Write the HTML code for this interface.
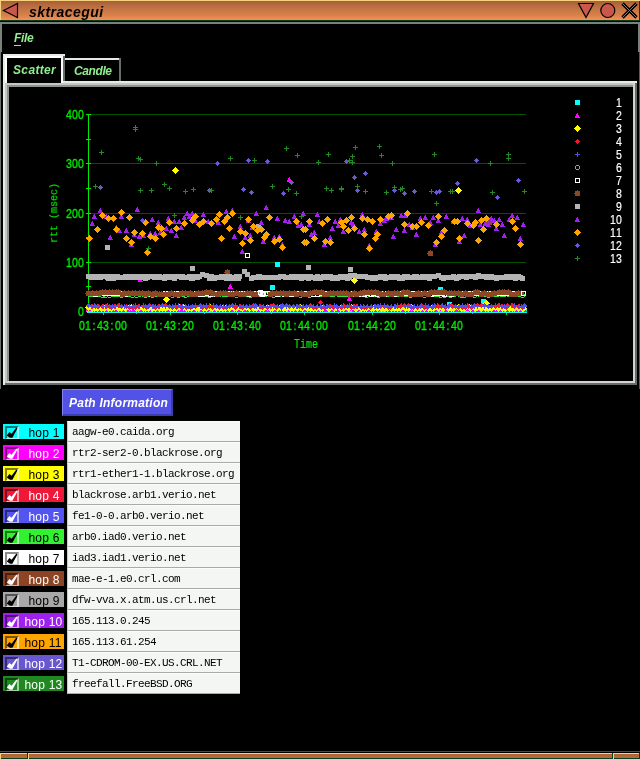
<!DOCTYPE html>
<html><head><meta charset="utf-8"><title>sktracegui</title>
<style>
html,body{margin:0;padding:0;background:#000;}
body{width:640px;height:759px;position:relative;overflow:hidden;font-family:"Liberation Sans",sans-serif;}
.a{position:absolute;}
.mono{font-family:"Liberation Mono",monospace;}
.dg6{font-family:"Liberation Sans",sans-serif;font-size:10.5px !important;transform:scale(1,1.18) !important;}
.dg6 i{display:inline-block;width:6px;text-align:center;font-style:normal;}
.tl{will-change:transform;font-size:10px;line-height:14px;height:14px;white-space:nowrap;transform:scale(1,1.12);transform-origin:50% 50%;-webkit-text-stroke:0.3px;}
.mono.tl{-webkit-text-stroke:0.15px;}
#title{left:0;top:0;width:640px;height:21px;background:linear-gradient(#a45e36 0px,#a65f37 1px,#b66a3e 5px,#c67747 10px,#d97f49 15px,#ea8953 18px,#f48f5c 20px);}
.hi{background:#f6d27e;}
.dg{background:#06401c;}
.hl{will-change:transform;font-style:italic;font-weight:bold;color:#90ee90;font-size:12px;letter-spacing:-0.3px;white-space:nowrap;}
.hop{overflow:hidden;will-change:transform;left:3px;width:61px;height:15px;font-size:12px;line-height:15px;white-space:nowrap;}
.hop span{position:absolute;top:2px;letter-spacing:0.2px;}
.cb{position:absolute;left:2px;top:2px;width:10px;height:10px;border-style:solid;border-width:2px 2px 1px 2px;}
.ent{will-change:transform;left:67px;width:173px;height:21px;background:#f4f6f4;box-sizing:border-box;border-bottom:1px solid #a8aca8;border-left:1px solid #c8ccc8;border-top:1px solid #fafcfa;font-family:"Liberation Mono",monospace;font-size:11px;letter-spacing:-0.6px;line-height:20px;color:#000;padding-left:4px;white-space:nowrap;}
</style></head>
<body>
<div class="a" id="title"></div>
<div class="a hi" style="left:0;top:0;width:640px;height:1px"></div>
<div class="a hi" style="left:0;top:0;width:1px;height:20px"></div>
<div class="a dg" style="left:0;top:20px;width:640px;height:1px"></div>
<div class="a dg" style="left:639px;top:1px;width:1px;height:20px"></div>
<svg class="a" style="left:0;top:0" width="640" height="21" viewBox="0 0 640 21">
<polygon points="3.5,10.5 17.5,3.5 17.5,17.5" fill="#c9574c" stroke="#000" stroke-width="1.2"/>
<polygon points="578.5,3.5 593.5,3.5 586,17.5" fill="#c9574c" stroke="#000" stroke-width="1.2"/>
<circle cx="607.8" cy="10.5" r="7" fill="#c9574c" stroke="#000" stroke-width="1.2"/>
<path d="M622.5,3.5 L636.5,17.5 M636.5,3.5 L622.5,17.5" stroke="#000" stroke-width="3.2" fill="none"/>
<path d="M622.5,3.5 L636.5,17.5 M636.5,3.5 L622.5,17.5" stroke="#d05a54" stroke-width="1" fill="none"/>
</svg>
<div class="a" style="left:29px;top:4px;font-size:14px;line-height:17px;font-weight:bold;font-style:italic;color:#000;white-space:nowrap;letter-spacing:0.45px;will-change:transform" id="ttl">sktracegui</div>
<div class="a" style="left:0;top:22px;width:640px;height:2px;background:#7a807c"></div>
<div class="a" style="left:0;top:22px;width:2px;height:30px;background:#7a807c"></div>
<div class="a" style="left:0;top:52px;width:1px;height:337px;background:#6a706c"></div>
<div class="a" style="left:638px;top:22px;width:2px;height:30px;background:#7a807c"></div>
<div class="a" style="left:639px;top:52px;width:1px;height:337px;background:#565c58"></div>
<div class="a hl" style="left:14px;top:31px;line-height:14px" id="file">File</div>
<div class="a" style="left:14px;top:45px;width:7px;height:1px;background:#90ee90"></div>
<div class="a" style="left:3px;top:81px;width:634px;height:304px;background:#e6eae6"></div>
<div class="a" style="left:5px;top:83px;width:632px;height:302px;background:#c4c8c4"></div>
<div class="a" style="left:7px;top:85px;width:630px;height:300px;background:#8e928e"></div>
<div class="a" style="left:5px;top:383px;width:632px;height:2px;background:#666c68"></div>
<div class="a" style="left:635px;top:83px;width:2px;height:302px;background:#666c68"></div>
<div class="a" style="left:7px;top:381px;width:628px;height:2px;background:#d2d6d2"></div>
<div class="a" style="left:633px;top:83px;width:2px;height:300px;background:#d2d6d2"></div>
<div class="a" style="left:9px;top:87px;width:624px;height:294px;background:#000"></div>
<div class="a" style="left:3px;top:54px;width:62px;height:29px;background:#e6eae6"></div>
<div class="a" style="left:5px;top:56px;width:58px;height:27px;background:#fff"></div>
<div class="a" style="left:63px;top:56px;width:2px;height:25px;background:#666c68"></div>
<div class="a" style="left:7px;top:58px;width:54px;height:25px;background:#000"></div>
<div class="a hl" style="left:13px;top:63px;line-height:14px;letter-spacing:0.35px" id="sc">Scatter</div>
<div class="a" style="left:65px;top:58px;width:56px;height:23px;background:#e6eae6"></div>
<div class="a" style="left:119px;top:58px;width:2px;height:23px;background:#666c68"></div>
<div class="a" style="left:65px;top:60px;width:54px;height:21px;background:#000"></div>
<div class="a hl" style="left:74px;top:64px;line-height:14px;letter-spacing:-0.4px" id="ca">Candle</div>
<svg class="a" style="left:0;top:0" width="640" height="400" viewBox="0 0 640 400" shape-rendering="crispEdges">
<rect x="91" y="262" width="435" height="1" fill="#005400"/>
<rect x="91" y="213" width="435" height="1" fill="#005400"/>
<rect x="91" y="163" width="435" height="1" fill="#005400"/>
<rect x="91" y="114" width="435" height="1" fill="#005400"/>
<rect x="88" y="114" width="1" height="199" fill="#00ec00"/>
<rect x="86" y="311" width="5" height="1" fill="#00ec00"/>
<rect x="86" y="262" width="5" height="1" fill="#00ec00"/>
<rect x="86" y="213" width="5" height="1" fill="#00ec00"/>
<rect x="86" y="163" width="5" height="1" fill="#00ec00"/>
<rect x="86" y="114" width="5" height="1" fill="#00ec00"/>
<rect x="86" y="286" width="5" height="1" fill="#00ec00"/>
<rect x="86" y="237" width="5" height="1" fill="#00ec00"/>
<rect x="86" y="188" width="5" height="1" fill="#00ec00"/>
<rect x="86" y="139" width="5" height="1" fill="#00ec00"/>
<rect x="103" y="313" width="1" height="2" fill="#00ec00"/>
<rect x="136" y="313" width="1" height="1" fill="#00ec00"/>
<rect x="170" y="313" width="1" height="2" fill="#00ec00"/>
<rect x="204" y="313" width="1" height="1" fill="#00ec00"/>
<rect x="237" y="313" width="1" height="2" fill="#00ec00"/>
<rect x="271" y="313" width="1" height="1" fill="#00ec00"/>
<rect x="304" y="313" width="1" height="2" fill="#00ec00"/>
<rect x="338" y="313" width="1" height="1" fill="#00ec00"/>
<rect x="372" y="313" width="1" height="2" fill="#00ec00"/>
<rect x="405" y="313" width="1" height="1" fill="#00ec00"/>
<rect x="439" y="313" width="1" height="2" fill="#00ec00"/>
<rect x="472" y="313" width="1" height="1" fill="#00ec00"/>
<rect x="506" y="313" width="1" height="2" fill="#00ec00"/>
<g><rect x="87" y="308" width="5" height="5" fill="#00ffff"/><rect x="90" y="308" width="5" height="5" fill="#00ffff"/><rect x="94" y="308" width="5" height="5" fill="#00ffff"/><rect x="97" y="308" width="5" height="5" fill="#00ffff"/><rect x="100" y="308" width="5" height="5" fill="#00ffff"/><rect x="103" y="308" width="5" height="5" fill="#00ffff"/><rect x="106" y="308" width="5" height="5" fill="#00ffff"/><rect x="110" y="308" width="5" height="5" fill="#00ffff"/><rect x="114" y="308" width="5" height="5" fill="#00ffff"/><rect x="117" y="308" width="5" height="5" fill="#00ffff"/><rect x="120" y="308" width="5" height="5" fill="#00ffff"/><rect x="123" y="308" width="5" height="5" fill="#00ffff"/><rect x="127" y="308" width="5" height="5" fill="#00ffff"/><rect x="131" y="308" width="5" height="5" fill="#00ffff"/><rect x="134" y="308" width="5" height="5" fill="#00ffff"/><rect x="137" y="308" width="5" height="5" fill="#00ffff"/><rect x="141" y="308" width="5" height="5" fill="#00ffff"/><rect x="144" y="308" width="5" height="5" fill="#00ffff"/><rect x="147" y="308" width="5" height="5" fill="#00ffff"/><rect x="151" y="308" width="5" height="5" fill="#00ffff"/><rect x="153" y="308" width="5" height="5" fill="#00ffff"/><rect x="157" y="308" width="5" height="5" fill="#00ffff"/><rect x="161" y="308" width="5" height="5" fill="#00ffff"/><rect x="163" y="308" width="5" height="5" fill="#00ffff"/><rect x="167" y="308" width="5" height="5" fill="#00ffff"/><rect x="170" y="308" width="5" height="5" fill="#00ffff"/><rect x="173" y="308" width="5" height="5" fill="#00ffff"/><rect x="177" y="308" width="5" height="5" fill="#00ffff"/><rect x="181" y="308" width="5" height="5" fill="#00ffff"/><rect x="184" y="308" width="5" height="5" fill="#00ffff"/><rect x="187" y="308" width="5" height="5" fill="#00ffff"/><rect x="191" y="308" width="5" height="5" fill="#00ffff"/><rect x="194" y="308" width="5" height="5" fill="#00ffff"/><rect x="198" y="308" width="5" height="5" fill="#00ffff"/><rect x="201" y="308" width="5" height="5" fill="#00ffff"/><rect x="204" y="308" width="5" height="5" fill="#00ffff"/><rect x="208" y="308" width="5" height="5" fill="#00ffff"/><rect x="211" y="308" width="5" height="5" fill="#00ffff"/><rect x="215" y="308" width="5" height="5" fill="#00ffff"/><rect x="218" y="308" width="5" height="5" fill="#00ffff"/><rect x="221" y="308" width="5" height="5" fill="#00ffff"/><rect x="224" y="308" width="5" height="5" fill="#00ffff"/><rect x="228" y="308" width="5" height="5" fill="#00ffff"/><rect x="231" y="308" width="5" height="5" fill="#00ffff"/><rect x="235" y="308" width="5" height="5" fill="#00ffff"/><rect x="238" y="308" width="5" height="5" fill="#00ffff"/><rect x="242" y="308" width="5" height="5" fill="#00ffff"/><rect x="244" y="308" width="5" height="5" fill="#00ffff"/><rect x="248" y="308" width="5" height="5" fill="#00ffff"/><rect x="252" y="308" width="5" height="5" fill="#00ffff"/><rect x="254" y="308" width="5" height="5" fill="#00ffff"/><rect x="258" y="308" width="5" height="5" fill="#00ffff"/><rect x="262" y="308" width="5" height="5" fill="#00ffff"/><rect x="265" y="308" width="5" height="5" fill="#00ffff"/><rect x="269" y="308" width="5" height="5" fill="#00ffff"/><rect x="271" y="308" width="5" height="5" fill="#00ffff"/><rect x="274" y="308" width="5" height="5" fill="#00ffff"/><rect x="278" y="308" width="5" height="5" fill="#00ffff"/><rect x="282" y="308" width="5" height="5" fill="#00ffff"/><rect x="285" y="308" width="5" height="5" fill="#00ffff"/><rect x="288" y="308" width="5" height="5" fill="#00ffff"/><rect x="291" y="308" width="5" height="5" fill="#00ffff"/><rect x="295" y="308" width="5" height="5" fill="#00ffff"/><rect x="299" y="308" width="5" height="5" fill="#00ffff"/><rect x="301" y="308" width="5" height="5" fill="#00ffff"/><rect x="305" y="308" width="5" height="5" fill="#00ffff"/><rect x="308" y="308" width="5" height="5" fill="#00ffff"/><rect x="311" y="308" width="5" height="5" fill="#00ffff"/><rect x="315" y="308" width="5" height="5" fill="#00ffff"/><rect x="318" y="308" width="5" height="5" fill="#00ffff"/><rect x="322" y="308" width="5" height="5" fill="#00ffff"/><rect x="325" y="308" width="5" height="5" fill="#00ffff"/><rect x="328" y="308" width="5" height="5" fill="#00ffff"/><rect x="332" y="308" width="5" height="5" fill="#00ffff"/><rect x="335" y="308" width="5" height="5" fill="#00ffff"/><rect x="339" y="308" width="5" height="5" fill="#00ffff"/><rect x="342" y="308" width="5" height="5" fill="#00ffff"/><rect x="345" y="308" width="5" height="5" fill="#00ffff"/><rect x="348" y="308" width="5" height="5" fill="#00ffff"/><rect x="352" y="308" width="5" height="5" fill="#00ffff"/><rect x="356" y="308" width="5" height="5" fill="#00ffff"/><rect x="359" y="308" width="5" height="5" fill="#00ffff"/><rect x="362" y="308" width="5" height="5" fill="#00ffff"/><rect x="366" y="308" width="5" height="5" fill="#00ffff"/><rect x="369" y="308" width="5" height="5" fill="#00ffff"/><rect x="372" y="308" width="5" height="5" fill="#00ffff"/><rect x="376" y="308" width="5" height="5" fill="#00ffff"/><rect x="379" y="308" width="5" height="5" fill="#00ffff"/><rect x="382" y="308" width="5" height="5" fill="#00ffff"/><rect x="386" y="308" width="5" height="5" fill="#00ffff"/><rect x="389" y="308" width="5" height="5" fill="#00ffff"/><rect x="392" y="308" width="5" height="5" fill="#00ffff"/><rect x="396" y="308" width="5" height="5" fill="#00ffff"/><rect x="399" y="308" width="5" height="5" fill="#00ffff"/><rect x="402" y="308" width="5" height="5" fill="#00ffff"/><rect x="405" y="308" width="5" height="5" fill="#00ffff"/><rect x="409" y="308" width="5" height="5" fill="#00ffff"/><rect x="413" y="308" width="5" height="5" fill="#00ffff"/><rect x="416" y="308" width="5" height="5" fill="#00ffff"/><rect x="419" y="308" width="5" height="5" fill="#00ffff"/><rect x="422" y="308" width="5" height="5" fill="#00ffff"/><rect x="426" y="308" width="5" height="5" fill="#00ffff"/><rect x="430" y="308" width="5" height="5" fill="#00ffff"/><rect x="433" y="308" width="5" height="5" fill="#00ffff"/><rect x="436" y="308" width="5" height="5" fill="#00ffff"/><rect x="440" y="308" width="5" height="5" fill="#00ffff"/><rect x="442" y="308" width="5" height="5" fill="#00ffff"/><rect x="446" y="308" width="5" height="5" fill="#00ffff"/><rect x="450" y="308" width="5" height="5" fill="#00ffff"/><rect x="453" y="308" width="5" height="5" fill="#00ffff"/><rect x="456" y="308" width="5" height="5" fill="#00ffff"/><rect x="459" y="308" width="5" height="5" fill="#00ffff"/><rect x="463" y="308" width="5" height="5" fill="#00ffff"/><rect x="467" y="308" width="5" height="5" fill="#00ffff"/><rect x="469" y="308" width="5" height="5" fill="#00ffff"/><rect x="473" y="308" width="5" height="5" fill="#00ffff"/><rect x="477" y="308" width="5" height="5" fill="#00ffff"/><rect x="480" y="308" width="5" height="5" fill="#00ffff"/><rect x="483" y="308" width="5" height="5" fill="#00ffff"/><rect x="486" y="308" width="5" height="5" fill="#00ffff"/><rect x="489" y="308" width="5" height="5" fill="#00ffff"/><rect x="494" y="308" width="5" height="5" fill="#00ffff"/><rect x="496" y="308" width="5" height="5" fill="#00ffff"/><rect x="500" y="308" width="5" height="5" fill="#00ffff"/><rect x="503" y="308" width="5" height="5" fill="#00ffff"/><rect x="507" y="308" width="5" height="5" fill="#00ffff"/><rect x="510" y="308" width="5" height="5" fill="#00ffff"/><rect x="513" y="308" width="5" height="5" fill="#00ffff"/><rect x="516" y="308" width="5" height="5" fill="#00ffff"/><rect x="520" y="308" width="5" height="5" fill="#00ffff"/><rect x="522" y="308" width="5" height="5" fill="#00ffff"/><rect x="275" y="262" width="5" height="5" fill="#00ffff"/><rect x="270" y="285" width="5" height="5" fill="#00ffff"/><rect x="438" y="287" width="5" height="5" fill="#00ffff"/><rect x="481" y="299" width="5" height="5" fill="#00ffff"/><rect x="447" y="302" width="5" height="5" fill="#00ffff"/></g>
<g><path fill="#ff00ff" d="M88,306h1v2h1v2h1v1h-5v-2h1v-2h1z"/><path fill="#ff00ff" d="M92,306h1v2h1v2h1v1h-5v-2h1v-2h1z"/><path fill="#ff00ff" d="M95,307h1v2h1v2h1v1h-5v-2h1v-2h1z"/><path fill="#ff00ff" d="M98,307h1v2h1v2h1v1h-5v-2h1v-2h1z"/><path fill="#ff00ff" d="M102,307h1v2h1v2h1v1h-5v-2h1v-2h1z"/><path fill="#ff00ff" d="M104,307h1v2h1v2h1v1h-5v-2h1v-2h1z"/><path fill="#ff00ff" d="M108,307h1v2h1v2h1v1h-5v-2h1v-2h1z"/><path fill="#ff00ff" d="M111,307h1v2h1v2h1v1h-5v-2h1v-2h1z"/><path fill="#ff00ff" d="M115,307h1v2h1v2h1v1h-5v-2h1v-2h1z"/><path fill="#ff00ff" d="M118,307h1v2h1v2h1v1h-5v-2h1v-2h1z"/><path fill="#ff00ff" d="M122,307h1v2h1v2h1v1h-5v-2h1v-2h1z"/><path fill="#ff00ff" d="M125,306h1v2h1v2h1v1h-5v-2h1v-2h1z"/><path fill="#ff00ff" d="M129,307h1v2h1v2h1v1h-5v-2h1v-2h1z"/><path fill="#ff00ff" d="M132,307h1v2h1v2h1v1h-5v-2h1v-2h1z"/><path fill="#ff00ff" d="M135,307h1v2h1v2h1v1h-5v-2h1v-2h1z"/><path fill="#ff00ff" d="M139,307h1v2h1v2h1v1h-5v-2h1v-2h1z"/><path fill="#ff00ff" d="M141,307h1v2h1v2h1v1h-5v-2h1v-2h1z"/><path fill="#ff00ff" d="M145,307h1v2h1v2h1v1h-5v-2h1v-2h1z"/><path fill="#ff00ff" d="M148,307h1v2h1v2h1v1h-5v-2h1v-2h1z"/><path fill="#ff00ff" d="M151,306h1v2h1v2h1v1h-5v-2h1v-2h1z"/><path fill="#ff00ff" d="M155,307h1v2h1v2h1v1h-5v-2h1v-2h1z"/><path fill="#ff00ff" d="M159,307h1v2h1v2h1v1h-5v-2h1v-2h1z"/><path fill="#ff00ff" d="M163,307h1v2h1v2h1v1h-5v-2h1v-2h1z"/><path fill="#ff00ff" d="M165,307h1v2h1v2h1v1h-5v-2h1v-2h1z"/><path fill="#ff00ff" d="M170,307h1v2h1v2h1v1h-5v-2h1v-2h1z"/><path fill="#ff00ff" d="M173,307h1v2h1v2h1v1h-5v-2h1v-2h1z"/><path fill="#ff00ff" d="M176,306h1v2h1v2h1v1h-5v-2h1v-2h1z"/><path fill="#ff00ff" d="M178,307h1v2h1v2h1v1h-5v-2h1v-2h1z"/><path fill="#ff00ff" d="M182,307h1v2h1v2h1v1h-5v-2h1v-2h1z"/><path fill="#ff00ff" d="M186,307h1v2h1v2h1v1h-5v-2h1v-2h1z"/><path fill="#ff00ff" d="M188,307h1v2h1v2h1v1h-5v-2h1v-2h1z"/><path fill="#ff00ff" d="M193,307h1v2h1v2h1v1h-5v-2h1v-2h1z"/><path fill="#ff00ff" d="M196,307h1v2h1v2h1v1h-5v-2h1v-2h1z"/><path fill="#ff00ff" d="M200,306h1v2h1v2h1v1h-5v-2h1v-2h1z"/><path fill="#ff00ff" d="M202,307h1v2h1v2h1v1h-5v-2h1v-2h1z"/><path fill="#ff00ff" d="M206,307h1v2h1v2h1v1h-5v-2h1v-2h1z"/><path fill="#ff00ff" d="M209,306h1v2h1v2h1v1h-5v-2h1v-2h1z"/><path fill="#ff00ff" d="M211,306h1v2h1v2h1v1h-5v-2h1v-2h1z"/><path fill="#ff00ff" d="M215,307h1v2h1v2h1v1h-5v-2h1v-2h1z"/><path fill="#ff00ff" d="M219,307h1v2h1v2h1v1h-5v-2h1v-2h1z"/><path fill="#ff00ff" d="M222,306h1v2h1v2h1v1h-5v-2h1v-2h1z"/><path fill="#ff00ff" d="M226,307h1v2h1v2h1v1h-5v-2h1v-2h1z"/><path fill="#ff00ff" d="M229,307h1v2h1v2h1v1h-5v-2h1v-2h1z"/><path fill="#ff00ff" d="M232,307h1v2h1v2h1v1h-5v-2h1v-2h1z"/><path fill="#ff00ff" d="M236,307h1v2h1v2h1v1h-5v-2h1v-2h1z"/><path fill="#ff00ff" d="M239,307h1v2h1v2h1v1h-5v-2h1v-2h1z"/><path fill="#ff00ff" d="M243,307h1v2h1v2h1v1h-5v-2h1v-2h1z"/><path fill="#ff00ff" d="M246,307h1v2h1v2h1v1h-5v-2h1v-2h1z"/><path fill="#ff00ff" d="M249,307h1v2h1v2h1v1h-5v-2h1v-2h1z"/><path fill="#ff00ff" d="M252,307h1v2h1v2h1v1h-5v-2h1v-2h1z"/><path fill="#ff00ff" d="M257,307h1v2h1v2h1v1h-5v-2h1v-2h1z"/><path fill="#ff00ff" d="M260,307h1v2h1v2h1v1h-5v-2h1v-2h1z"/><path fill="#ff00ff" d="M262,307h1v2h1v2h1v1h-5v-2h1v-2h1z"/><path fill="#ff00ff" d="M266,307h1v2h1v2h1v1h-5v-2h1v-2h1z"/><path fill="#ff00ff" d="M270,307h1v2h1v2h1v1h-5v-2h1v-2h1z"/><path fill="#ff00ff" d="M273,307h1v2h1v2h1v1h-5v-2h1v-2h1z"/><path fill="#ff00ff" d="M277,307h1v2h1v2h1v1h-5v-2h1v-2h1z"/><path fill="#ff00ff" d="M280,307h1v2h1v2h1v1h-5v-2h1v-2h1z"/><path fill="#ff00ff" d="M284,307h1v2h1v2h1v1h-5v-2h1v-2h1z"/><path fill="#ff00ff" d="M286,306h1v2h1v2h1v1h-5v-2h1v-2h1z"/><path fill="#ff00ff" d="M290,307h1v2h1v2h1v1h-5v-2h1v-2h1z"/><path fill="#ff00ff" d="M293,306h1v2h1v2h1v1h-5v-2h1v-2h1z"/><path fill="#ff00ff" d="M296,307h1v2h1v2h1v1h-5v-2h1v-2h1z"/><path fill="#ff00ff" d="M300,307h1v2h1v2h1v1h-5v-2h1v-2h1z"/><path fill="#ff00ff" d="M304,307h1v2h1v2h1v1h-5v-2h1v-2h1z"/><path fill="#ff00ff" d="M307,307h1v2h1v2h1v1h-5v-2h1v-2h1z"/><path fill="#ff00ff" d="M310,307h1v2h1v2h1v1h-5v-2h1v-2h1z"/><path fill="#ff00ff" d="M314,306h1v2h1v2h1v1h-5v-2h1v-2h1z"/><path fill="#ff00ff" d="M316,307h1v2h1v2h1v1h-5v-2h1v-2h1z"/><path fill="#ff00ff" d="M320,307h1v2h1v2h1v1h-5v-2h1v-2h1z"/><path fill="#ff00ff" d="M322,307h1v2h1v2h1v1h-5v-2h1v-2h1z"/><path fill="#ff00ff" d="M326,307h1v2h1v2h1v1h-5v-2h1v-2h1z"/><path fill="#ff00ff" d="M331,307h1v2h1v2h1v1h-5v-2h1v-2h1z"/><path fill="#ff00ff" d="M333,306h1v2h1v2h1v1h-5v-2h1v-2h1z"/><path fill="#ff00ff" d="M337,307h1v2h1v2h1v1h-5v-2h1v-2h1z"/><path fill="#ff00ff" d="M341,307h1v2h1v2h1v1h-5v-2h1v-2h1z"/><path fill="#ff00ff" d="M343,307h1v2h1v2h1v1h-5v-2h1v-2h1z"/><path fill="#ff00ff" d="M346,307h1v2h1v2h1v1h-5v-2h1v-2h1z"/><path fill="#ff00ff" d="M351,306h1v2h1v2h1v1h-5v-2h1v-2h1z"/><path fill="#ff00ff" d="M354,307h1v2h1v2h1v1h-5v-2h1v-2h1z"/><path fill="#ff00ff" d="M356,307h1v2h1v2h1v1h-5v-2h1v-2h1z"/><path fill="#ff00ff" d="M360,306h1v2h1v2h1v1h-5v-2h1v-2h1z"/><path fill="#ff00ff" d="M364,307h1v2h1v2h1v1h-5v-2h1v-2h1z"/><path fill="#ff00ff" d="M367,307h1v2h1v2h1v1h-5v-2h1v-2h1z"/><path fill="#ff00ff" d="M370,307h1v2h1v2h1v1h-5v-2h1v-2h1z"/><path fill="#ff00ff" d="M373,307h1v2h1v2h1v1h-5v-2h1v-2h1z"/><path fill="#ff00ff" d="M376,307h1v2h1v2h1v1h-5v-2h1v-2h1z"/><path fill="#ff00ff" d="M380,306h1v2h1v2h1v1h-5v-2h1v-2h1z"/><path fill="#ff00ff" d="M384,306h1v2h1v2h1v1h-5v-2h1v-2h1z"/><path fill="#ff00ff" d="M388,307h1v2h1v2h1v1h-5v-2h1v-2h1z"/><path fill="#ff00ff" d="M390,307h1v2h1v2h1v1h-5v-2h1v-2h1z"/><path fill="#ff00ff" d="M393,307h1v2h1v2h1v1h-5v-2h1v-2h1z"/><path fill="#ff00ff" d="M397,307h1v2h1v2h1v1h-5v-2h1v-2h1z"/><path fill="#ff00ff" d="M402,307h1v2h1v2h1v1h-5v-2h1v-2h1z"/><path fill="#ff00ff" d="M404,307h1v2h1v2h1v1h-5v-2h1v-2h1z"/><path fill="#ff00ff" d="M407,307h1v2h1v2h1v1h-5v-2h1v-2h1z"/><path fill="#ff00ff" d="M410,307h1v2h1v2h1v1h-5v-2h1v-2h1z"/><path fill="#ff00ff" d="M413,307h1v2h1v2h1v1h-5v-2h1v-2h1z"/><path fill="#ff00ff" d="M417,307h1v2h1v2h1v1h-5v-2h1v-2h1z"/><path fill="#ff00ff" d="M421,307h1v2h1v2h1v1h-5v-2h1v-2h1z"/><path fill="#ff00ff" d="M424,307h1v2h1v2h1v1h-5v-2h1v-2h1z"/><path fill="#ff00ff" d="M427,307h1v2h1v2h1v1h-5v-2h1v-2h1z"/><path fill="#ff00ff" d="M430,307h1v2h1v2h1v1h-5v-2h1v-2h1z"/><path fill="#ff00ff" d="M435,307h1v2h1v2h1v1h-5v-2h1v-2h1z"/><path fill="#ff00ff" d="M437,306h1v2h1v2h1v1h-5v-2h1v-2h1z"/><path fill="#ff00ff" d="M442,306h1v2h1v2h1v1h-5v-2h1v-2h1z"/><path fill="#ff00ff" d="M445,307h1v2h1v2h1v1h-5v-2h1v-2h1z"/><path fill="#ff00ff" d="M449,307h1v2h1v2h1v1h-5v-2h1v-2h1z"/><path fill="#ff00ff" d="M451,307h1v2h1v2h1v1h-5v-2h1v-2h1z"/><path fill="#ff00ff" d="M455,307h1v2h1v2h1v1h-5v-2h1v-2h1z"/><path fill="#ff00ff" d="M458,307h1v2h1v2h1v1h-5v-2h1v-2h1z"/><path fill="#ff00ff" d="M462,306h1v2h1v2h1v1h-5v-2h1v-2h1z"/><path fill="#ff00ff" d="M465,306h1v2h1v2h1v1h-5v-2h1v-2h1z"/><path fill="#ff00ff" d="M468,306h1v2h1v2h1v1h-5v-2h1v-2h1z"/><path fill="#ff00ff" d="M471,307h1v2h1v2h1v1h-5v-2h1v-2h1z"/><path fill="#ff00ff" d="M475,306h1v2h1v2h1v1h-5v-2h1v-2h1z"/><path fill="#ff00ff" d="M477,307h1v2h1v2h1v1h-5v-2h1v-2h1z"/><path fill="#ff00ff" d="M482,306h1v2h1v2h1v1h-5v-2h1v-2h1z"/><path fill="#ff00ff" d="M484,307h1v2h1v2h1v1h-5v-2h1v-2h1z"/><path fill="#ff00ff" d="M487,306h1v2h1v2h1v1h-5v-2h1v-2h1z"/><path fill="#ff00ff" d="M491,307h1v2h1v2h1v1h-5v-2h1v-2h1z"/><path fill="#ff00ff" d="M495,307h1v2h1v2h1v1h-5v-2h1v-2h1z"/><path fill="#ff00ff" d="M498,307h1v2h1v2h1v1h-5v-2h1v-2h1z"/><path fill="#ff00ff" d="M501,307h1v2h1v2h1v1h-5v-2h1v-2h1z"/><path fill="#ff00ff" d="M505,306h1v2h1v2h1v1h-5v-2h1v-2h1z"/><path fill="#ff00ff" d="M507,307h1v2h1v2h1v1h-5v-2h1v-2h1z"/><path fill="#ff00ff" d="M512,307h1v2h1v2h1v1h-5v-2h1v-2h1z"/><path fill="#ff00ff" d="M516,307h1v2h1v2h1v1h-5v-2h1v-2h1z"/><path fill="#ff00ff" d="M518,307h1v2h1v2h1v1h-5v-2h1v-2h1z"/><path fill="#ff00ff" d="M521,307h1v2h1v2h1v1h-5v-2h1v-2h1z"/><path fill="#ff00ff" d="M524,307h1v2h1v2h1v1h-5v-2h1v-2h1z"/><path fill="#ff00ff" d="M289,177h1v2h1v2h1v1h-5v-2h1v-2h1z"/><path fill="#ff00ff" d="M140,277h1v2h1v2h1v1h-5v-2h1v-2h1z"/><path fill="#ff00ff" d="M230,284h1v2h1v2h1v1h-5v-2h1v-2h1z"/><path fill="#ff00ff" d="M349,296h1v2h1v2h1v1h-5v-2h1v-2h1z"/></g>
<g><polygon fill="#ffff00" points="88.5,304.0 92.0,307.5 88.5,311.0 85.0,307.5"/><polygon fill="#ffff00" points="92.5,305.0 96.0,308.5 92.5,312.0 89.0,308.5"/><polygon fill="#ffff00" points="94.5,305.0 98.0,308.5 94.5,312.0 91.0,308.5"/><polygon fill="#ffff00" points="97.5,305.0 101.0,308.5 97.5,312.0 94.0,308.5"/><polygon fill="#ffff00" points="101.5,305.0 105.0,308.5 101.5,312.0 98.0,308.5"/><polygon fill="#ffff00" points="104.5,305.0 108.0,308.5 104.5,312.0 101.0,308.5"/><polygon fill="#ffff00" points="108.5,305.0 112.0,308.5 108.5,312.0 105.0,308.5"/><polygon fill="#ffff00" points="111.5,305.0 115.0,308.5 111.5,312.0 108.0,308.5"/><polygon fill="#ffff00" points="114.5,304.0 118.0,307.5 114.5,311.0 111.0,307.5"/><polygon fill="#ffff00" points="118.5,305.0 122.0,308.5 118.5,312.0 115.0,308.5"/><polygon fill="#ffff00" points="121.5,305.0 125.0,308.5 121.5,312.0 118.0,308.5"/><polygon fill="#ffff00" points="125.5,305.0 129.0,308.5 125.5,312.0 122.0,308.5"/><polygon fill="#ffff00" points="129.5,304.0 133.0,307.5 129.5,311.0 126.0,307.5"/><polygon fill="#ffff00" points="131.5,304.0 135.0,307.5 131.5,311.0 128.0,307.5"/><polygon fill="#ffff00" points="136.5,305.0 140.0,308.5 136.5,312.0 133.0,308.5"/><polygon fill="#ffff00" points="138.5,305.0 142.0,308.5 138.5,312.0 135.0,308.5"/><polygon fill="#ffff00" points="143.5,305.0 147.0,308.5 143.5,312.0 140.0,308.5"/><polygon fill="#ffff00" points="145.5,305.0 149.0,308.5 145.5,312.0 142.0,308.5"/><polygon fill="#ffff00" points="148.5,305.0 152.0,308.5 148.5,312.0 145.0,308.5"/><polygon fill="#ffff00" points="152.5,305.0 156.0,308.5 152.5,312.0 149.0,308.5"/><polygon fill="#ffff00" points="155.5,305.0 159.0,308.5 155.5,312.0 152.0,308.5"/><polygon fill="#ffff00" points="159.5,305.0 163.0,308.5 159.5,312.0 156.0,308.5"/><polygon fill="#ffff00" points="162.5,305.0 166.0,308.5 162.5,312.0 159.0,308.5"/><polygon fill="#ffff00" points="165.5,305.0 169.0,308.5 165.5,312.0 162.0,308.5"/><polygon fill="#ffff00" points="170.5,305.0 174.0,308.5 170.5,312.0 167.0,308.5"/><polygon fill="#ffff00" points="173.5,305.0 177.0,308.5 173.5,312.0 170.0,308.5"/><polygon fill="#ffff00" points="176.5,305.0 180.0,308.5 176.5,312.0 173.0,308.5"/><polygon fill="#ffff00" points="179.5,304.0 183.0,307.5 179.5,311.0 176.0,307.5"/><polygon fill="#ffff00" points="183.5,304.0 187.0,307.5 183.5,311.0 180.0,307.5"/><polygon fill="#ffff00" points="186.5,305.0 190.0,308.5 186.5,312.0 183.0,308.5"/><polygon fill="#ffff00" points="188.5,305.0 192.0,308.5 188.5,312.0 185.0,308.5"/><polygon fill="#ffff00" points="191.5,305.0 195.0,308.5 191.5,312.0 188.0,308.5"/><polygon fill="#ffff00" points="196.5,305.0 200.0,308.5 196.5,312.0 193.0,308.5"/><polygon fill="#ffff00" points="198.5,305.0 202.0,308.5 198.5,312.0 195.0,308.5"/><polygon fill="#ffff00" points="203.5,305.0 207.0,308.5 203.5,312.0 200.0,308.5"/><polygon fill="#ffff00" points="206.5,305.0 210.0,308.5 206.5,312.0 203.0,308.5"/><polygon fill="#ffff00" points="210.5,304.0 214.0,307.5 210.5,311.0 207.0,307.5"/><polygon fill="#ffff00" points="212.5,305.0 216.0,308.5 212.5,312.0 209.0,308.5"/><polygon fill="#ffff00" points="216.5,305.0 220.0,308.5 216.5,312.0 213.0,308.5"/><polygon fill="#ffff00" points="219.5,305.0 223.0,308.5 219.5,312.0 216.0,308.5"/><polygon fill="#ffff00" points="222.5,305.0 226.0,308.5 222.5,312.0 219.0,308.5"/><polygon fill="#ffff00" points="225.5,305.0 229.0,308.5 225.5,312.0 222.0,308.5"/><polygon fill="#ffff00" points="229.5,305.0 233.0,308.5 229.5,312.0 226.0,308.5"/><polygon fill="#ffff00" points="234.5,305.0 238.0,308.5 234.5,312.0 231.0,308.5"/><polygon fill="#ffff00" points="236.5,305.0 240.0,308.5 236.5,312.0 233.0,308.5"/><polygon fill="#ffff00" points="240.5,304.0 244.0,307.5 240.5,311.0 237.0,307.5"/><polygon fill="#ffff00" points="242.5,305.0 246.0,308.5 242.5,312.0 239.0,308.5"/><polygon fill="#ffff00" points="246.5,304.0 250.0,307.5 246.5,311.0 243.0,307.5"/><polygon fill="#ffff00" points="249.5,305.0 253.0,308.5 249.5,312.0 246.0,308.5"/><polygon fill="#ffff00" points="253.5,305.0 257.0,308.5 253.5,312.0 250.0,308.5"/><polygon fill="#ffff00" points="256.5,305.0 260.0,308.5 256.5,312.0 253.0,308.5"/><polygon fill="#ffff00" points="260.5,305.0 264.0,308.5 260.5,312.0 257.0,308.5"/><polygon fill="#ffff00" points="263.5,305.0 267.0,308.5 263.5,312.0 260.0,308.5"/><polygon fill="#ffff00" points="267.5,304.0 271.0,307.5 267.5,311.0 264.0,307.5"/><polygon fill="#ffff00" points="270.5,305.0 274.0,308.5 270.5,312.0 267.0,308.5"/><polygon fill="#ffff00" points="272.5,305.0 276.0,308.5 272.5,312.0 269.0,308.5"/><polygon fill="#ffff00" points="277.5,305.0 281.0,308.5 277.5,312.0 274.0,308.5"/><polygon fill="#ffff00" points="280.5,304.0 284.0,307.5 280.5,311.0 277.0,307.5"/><polygon fill="#ffff00" points="283.5,305.0 287.0,308.5 283.5,312.0 280.0,308.5"/><polygon fill="#ffff00" points="286.5,305.0 290.0,308.5 286.5,312.0 283.0,308.5"/><polygon fill="#ffff00" points="290.5,305.0 294.0,308.5 290.5,312.0 287.0,308.5"/><polygon fill="#ffff00" points="293.5,305.0 297.0,308.5 293.5,312.0 290.0,308.5"/><polygon fill="#ffff00" points="297.5,305.0 301.0,308.5 297.5,312.0 294.0,308.5"/><polygon fill="#ffff00" points="300.5,304.0 304.0,307.5 300.5,311.0 297.0,307.5"/><polygon fill="#ffff00" points="302.5,305.0 306.0,308.5 302.5,312.0 299.0,308.5"/><polygon fill="#ffff00" points="307.5,305.0 311.0,308.5 307.5,312.0 304.0,308.5"/><polygon fill="#ffff00" points="310.5,305.0 314.0,308.5 310.5,312.0 307.0,308.5"/><polygon fill="#ffff00" points="313.5,305.0 317.0,308.5 313.5,312.0 310.0,308.5"/><polygon fill="#ffff00" points="316.5,305.0 320.0,308.5 316.5,312.0 313.0,308.5"/><polygon fill="#ffff00" points="320.5,305.0 324.0,308.5 320.5,312.0 317.0,308.5"/><polygon fill="#ffff00" points="322.5,305.0 326.0,308.5 322.5,312.0 319.0,308.5"/><polygon fill="#ffff00" points="328.5,305.0 332.0,308.5 328.5,312.0 325.0,308.5"/><polygon fill="#ffff00" points="329.5,305.0 333.0,308.5 329.5,312.0 326.0,308.5"/><polygon fill="#ffff00" points="334.5,305.0 338.0,308.5 334.5,312.0 331.0,308.5"/><polygon fill="#ffff00" points="336.5,304.0 340.0,307.5 336.5,311.0 333.0,307.5"/><polygon fill="#ffff00" points="340.5,305.0 344.0,308.5 340.5,312.0 337.0,308.5"/><polygon fill="#ffff00" points="343.5,305.0 347.0,308.5 343.5,312.0 340.0,308.5"/><polygon fill="#ffff00" points="348.5,305.0 352.0,308.5 348.5,312.0 345.0,308.5"/><polygon fill="#ffff00" points="351.5,304.0 355.0,307.5 351.5,311.0 348.0,307.5"/><polygon fill="#ffff00" points="355.5,305.0 359.0,308.5 355.5,312.0 352.0,308.5"/><polygon fill="#ffff00" points="356.5,305.0 360.0,308.5 356.5,312.0 353.0,308.5"/><polygon fill="#ffff00" points="361.5,305.0 365.0,308.5 361.5,312.0 358.0,308.5"/><polygon fill="#ffff00" points="364.5,305.0 368.0,308.5 364.5,312.0 361.0,308.5"/><polygon fill="#ffff00" points="366.5,305.0 370.0,308.5 366.5,312.0 363.0,308.5"/><polygon fill="#ffff00" points="371.5,305.0 375.0,308.5 371.5,312.0 368.0,308.5"/><polygon fill="#ffff00" points="373.5,305.0 377.0,308.5 373.5,312.0 370.0,308.5"/><polygon fill="#ffff00" points="377.5,305.0 381.0,308.5 377.5,312.0 374.0,308.5"/><polygon fill="#ffff00" points="381.5,305.0 385.0,308.5 381.5,312.0 378.0,308.5"/><polygon fill="#ffff00" points="384.5,305.0 388.0,308.5 384.5,312.0 381.0,308.5"/><polygon fill="#ffff00" points="387.5,305.0 391.0,308.5 387.5,312.0 384.0,308.5"/><polygon fill="#ffff00" points="391.5,305.0 395.0,308.5 391.5,312.0 388.0,308.5"/><polygon fill="#ffff00" points="394.5,305.0 398.0,308.5 394.5,312.0 391.0,308.5"/><polygon fill="#ffff00" points="397.5,305.0 401.0,308.5 397.5,312.0 394.0,308.5"/><polygon fill="#ffff00" points="400.5,305.0 404.0,308.5 400.5,312.0 397.0,308.5"/><polygon fill="#ffff00" points="405.5,305.0 409.0,308.5 405.5,312.0 402.0,308.5"/><polygon fill="#ffff00" points="408.5,305.0 412.0,308.5 408.5,312.0 405.0,308.5"/><polygon fill="#ffff00" points="411.5,304.0 415.0,307.5 411.5,311.0 408.0,307.5"/><polygon fill="#ffff00" points="414.5,305.0 418.0,308.5 414.5,312.0 411.0,308.5"/><polygon fill="#ffff00" points="417.5,305.0 421.0,308.5 417.5,312.0 414.0,308.5"/><polygon fill="#ffff00" points="420.5,305.0 424.0,308.5 420.5,312.0 417.0,308.5"/><polygon fill="#ffff00" points="424.5,305.0 428.0,308.5 424.5,312.0 421.0,308.5"/><polygon fill="#ffff00" points="428.5,305.0 432.0,308.5 428.5,312.0 425.0,308.5"/><polygon fill="#ffff00" points="431.5,305.0 435.0,308.5 431.5,312.0 428.0,308.5"/><polygon fill="#ffff00" points="433.5,305.0 437.0,308.5 433.5,312.0 430.0,308.5"/><polygon fill="#ffff00" points="438.5,305.0 442.0,308.5 438.5,312.0 435.0,308.5"/><polygon fill="#ffff00" points="441.5,304.0 445.0,307.5 441.5,311.0 438.0,307.5"/><polygon fill="#ffff00" points="443.5,305.0 447.0,308.5 443.5,312.0 440.0,308.5"/><polygon fill="#ffff00" points="448.5,305.0 452.0,308.5 448.5,312.0 445.0,308.5"/><polygon fill="#ffff00" points="451.5,305.0 455.0,308.5 451.5,312.0 448.0,308.5"/><polygon fill="#ffff00" points="453.5,305.0 457.0,308.5 453.5,312.0 450.0,308.5"/><polygon fill="#ffff00" points="458.5,304.0 462.0,307.5 458.5,311.0 455.0,307.5"/><polygon fill="#ffff00" points="461.5,305.0 465.0,308.5 461.5,312.0 458.0,308.5"/><polygon fill="#ffff00" points="464.5,305.0 468.0,308.5 464.5,312.0 461.0,308.5"/><polygon fill="#ffff00" points="469.5,304.0 473.0,307.5 469.5,311.0 466.0,307.5"/><polygon fill="#ffff00" points="470.5,305.0 474.0,308.5 470.5,312.0 467.0,308.5"/><polygon fill="#ffff00" points="475.5,305.0 479.0,308.5 475.5,312.0 472.0,308.5"/><polygon fill="#ffff00" points="477.5,304.0 481.0,307.5 477.5,311.0 474.0,307.5"/><polygon fill="#ffff00" points="481.5,305.0 485.0,308.5 481.5,312.0 478.0,308.5"/><polygon fill="#ffff00" points="485.5,305.0 489.0,308.5 485.5,312.0 482.0,308.5"/><polygon fill="#ffff00" points="488.5,305.0 492.0,308.5 488.5,312.0 485.0,308.5"/><polygon fill="#ffff00" points="491.5,305.0 495.0,308.5 491.5,312.0 488.0,308.5"/><polygon fill="#ffff00" points="495.5,304.0 499.0,307.5 495.5,311.0 492.0,307.5"/><polygon fill="#ffff00" points="498.5,305.0 502.0,308.5 498.5,312.0 495.0,308.5"/><polygon fill="#ffff00" points="502.5,305.0 506.0,308.5 502.5,312.0 499.0,308.5"/><polygon fill="#ffff00" points="505.5,305.0 509.0,308.5 505.5,312.0 502.0,308.5"/><polygon fill="#ffff00" points="509.5,305.0 513.0,308.5 509.5,312.0 506.0,308.5"/><polygon fill="#ffff00" points="512.5,305.0 516.0,308.5 512.5,312.0 509.0,308.5"/><polygon fill="#ffff00" points="514.5,305.0 518.0,308.5 514.5,312.0 511.0,308.5"/><polygon fill="#ffff00" points="518.5,305.0 522.0,308.5 518.5,312.0 515.0,308.5"/><polygon fill="#ffff00" points="522.5,305.0 526.0,308.5 522.5,312.0 519.0,308.5"/><polygon fill="#ffff00" points="523.5,305.0 527.0,308.5 523.5,312.0 520.0,308.5"/><polygon fill="#ffff00" points="175.5,167.0 179.0,170.5 175.5,174.0 172.0,170.5"/><polygon fill="#ffff00" points="458.5,187.0 462.0,190.5 458.5,194.0 455.0,190.5"/><polygon fill="#ffff00" points="166.5,296.0 170.0,299.5 166.5,303.0 163.0,299.5"/><polygon fill="#ffff00" points="354.5,277.0 358.0,280.5 354.5,284.0 351.0,280.5"/><polygon fill="#ffff00" points="486.5,300.0 490.0,303.5 486.5,307.0 483.0,303.5"/></g>
<g><polygon fill="#f01838" points="88.5,303.0 91.0,305.5 88.5,308.0 86.0,305.5"/><polygon fill="#f01838" points="92.5,304.0 95.0,306.5 92.5,309.0 90.0,306.5"/><polygon fill="#f01838" points="95.5,304.0 98.0,306.5 95.5,309.0 93.0,306.5"/><polygon fill="#f01838" points="98.5,304.0 101.0,306.5 98.5,309.0 96.0,306.5"/><polygon fill="#f01838" points="102.5,304.0 105.0,306.5 102.5,309.0 100.0,306.5"/><polygon fill="#f01838" points="106.5,304.0 109.0,306.5 106.5,309.0 104.0,306.5"/><polygon fill="#f01838" points="109.5,304.0 112.0,306.5 109.5,309.0 107.0,306.5"/><polygon fill="#f01838" points="111.5,305.0 114.0,307.5 111.5,310.0 109.0,307.5"/><polygon fill="#f01838" points="114.5,304.0 117.0,306.5 114.5,309.0 112.0,306.5"/><polygon fill="#f01838" points="118.5,303.0 121.0,305.5 118.5,308.0 116.0,305.5"/><polygon fill="#f01838" points="121.5,304.0 124.0,306.5 121.5,309.0 119.0,306.5"/><polygon fill="#f01838" points="126.5,304.0 129.0,306.5 126.5,309.0 124.0,306.5"/><polygon fill="#f01838" points="129.5,305.0 132.0,307.5 129.5,310.0 127.0,307.5"/><polygon fill="#f01838" points="132.5,305.0 135.0,307.5 132.5,310.0 130.0,307.5"/><polygon fill="#f01838" points="135.5,305.0 138.0,307.5 135.5,310.0 133.0,307.5"/><polygon fill="#f01838" points="138.5,304.0 141.0,306.5 138.5,309.0 136.0,306.5"/><polygon fill="#f01838" points="143.5,304.0 146.0,306.5 143.5,309.0 141.0,306.5"/><polygon fill="#f01838" points="146.5,305.0 149.0,307.5 146.5,310.0 144.0,307.5"/><polygon fill="#f01838" points="149.5,303.0 152.0,305.5 149.5,308.0 147.0,305.5"/><polygon fill="#f01838" points="153.5,304.0 156.0,306.5 153.5,309.0 151.0,306.5"/><polygon fill="#f01838" points="155.5,305.0 158.0,307.5 155.5,310.0 153.0,307.5"/><polygon fill="#f01838" points="158.5,304.0 161.0,306.5 158.5,309.0 156.0,306.5"/><polygon fill="#f01838" points="162.5,303.0 165.0,305.5 162.5,308.0 160.0,305.5"/><polygon fill="#f01838" points="165.5,303.0 168.0,305.5 165.5,308.0 163.0,305.5"/><polygon fill="#f01838" points="169.5,304.0 172.0,306.5 169.5,309.0 167.0,306.5"/><polygon fill="#f01838" points="172.5,305.0 175.0,307.5 172.5,310.0 170.0,307.5"/><polygon fill="#f01838" points="176.5,305.0 179.0,307.5 176.5,310.0 174.0,307.5"/><polygon fill="#f01838" points="180.5,304.0 183.0,306.5 180.5,309.0 178.0,306.5"/><polygon fill="#f01838" points="182.5,305.0 185.0,307.5 182.5,310.0 180.0,307.5"/><polygon fill="#f01838" points="186.5,305.0 189.0,307.5 186.5,310.0 184.0,307.5"/><polygon fill="#f01838" points="190.5,305.0 193.0,307.5 190.5,310.0 188.0,307.5"/><polygon fill="#f01838" points="192.5,304.0 195.0,306.5 192.5,309.0 190.0,306.5"/><polygon fill="#f01838" points="195.5,304.0 198.0,306.5 195.5,309.0 193.0,306.5"/><polygon fill="#f01838" points="200.5,303.0 203.0,305.5 200.5,308.0 198.0,305.5"/><polygon fill="#f01838" points="202.5,305.0 205.0,307.5 202.5,310.0 200.0,307.5"/><polygon fill="#f01838" points="206.5,305.0 209.0,307.5 206.5,310.0 204.0,307.5"/><polygon fill="#f01838" points="209.5,304.0 212.0,306.5 209.5,309.0 207.0,306.5"/><polygon fill="#f01838" points="212.5,305.0 215.0,307.5 212.5,310.0 210.0,307.5"/><polygon fill="#f01838" points="216.5,304.0 219.0,306.5 216.5,309.0 214.0,306.5"/><polygon fill="#f01838" points="219.5,305.0 222.0,307.5 219.5,310.0 217.0,307.5"/><polygon fill="#f01838" points="223.5,305.0 226.0,307.5 223.5,310.0 221.0,307.5"/><polygon fill="#f01838" points="226.5,305.0 229.0,307.5 226.5,310.0 224.0,307.5"/><polygon fill="#f01838" points="229.5,304.0 232.0,306.5 229.5,309.0 227.0,306.5"/><polygon fill="#f01838" points="232.5,303.0 235.0,305.5 232.5,308.0 230.0,305.5"/><polygon fill="#f01838" points="235.5,305.0 238.0,307.5 235.5,310.0 233.0,307.5"/><polygon fill="#f01838" points="240.5,304.0 243.0,306.5 240.5,309.0 238.0,306.5"/><polygon fill="#f01838" points="242.5,305.0 245.0,307.5 242.5,310.0 240.0,307.5"/><polygon fill="#f01838" points="246.5,304.0 249.0,306.5 246.5,309.0 244.0,306.5"/><polygon fill="#f01838" points="250.5,305.0 253.0,307.5 250.5,310.0 248.0,307.5"/><polygon fill="#f01838" points="253.5,303.0 256.0,305.5 253.5,308.0 251.0,305.5"/><polygon fill="#f01838" points="255.5,303.0 258.0,305.5 255.5,308.0 253.0,305.5"/><polygon fill="#f01838" points="260.5,304.0 263.0,306.5 260.5,309.0 258.0,306.5"/><polygon fill="#f01838" points="262.5,305.0 265.0,307.5 262.5,310.0 260.0,307.5"/><polygon fill="#f01838" points="267.5,305.0 270.0,307.5 267.5,310.0 265.0,307.5"/><polygon fill="#f01838" points="270.5,304.0 273.0,306.5 270.5,309.0 268.0,306.5"/><polygon fill="#f01838" points="273.5,303.0 276.0,305.5 273.5,308.0 271.0,305.5"/><polygon fill="#f01838" points="276.5,305.0 279.0,307.5 276.5,310.0 274.0,307.5"/><polygon fill="#f01838" points="281.5,305.0 284.0,307.5 281.5,310.0 279.0,307.5"/><polygon fill="#f01838" points="282.5,303.0 285.0,305.5 282.5,308.0 280.0,305.5"/><polygon fill="#f01838" points="286.5,303.0 289.0,305.5 286.5,308.0 284.0,305.5"/><polygon fill="#f01838" points="289.5,304.0 292.0,306.5 289.5,309.0 287.0,306.5"/><polygon fill="#f01838" points="293.5,304.0 296.0,306.5 293.5,309.0 291.0,306.5"/><polygon fill="#f01838" points="297.5,304.0 300.0,306.5 297.5,309.0 295.0,306.5"/><polygon fill="#f01838" points="299.5,304.0 302.0,306.5 299.5,309.0 297.0,306.5"/><polygon fill="#f01838" points="302.5,305.0 305.0,307.5 302.5,310.0 300.0,307.5"/><polygon fill="#f01838" points="306.5,304.0 309.0,306.5 306.5,309.0 304.0,306.5"/><polygon fill="#f01838" points="310.5,303.0 313.0,305.5 310.5,308.0 308.0,305.5"/><polygon fill="#f01838" points="313.5,305.0 316.0,307.5 313.5,310.0 311.0,307.5"/><polygon fill="#f01838" points="316.5,305.0 319.0,307.5 316.5,310.0 314.0,307.5"/><polygon fill="#f01838" points="321.5,305.0 324.0,307.5 321.5,310.0 319.0,307.5"/><polygon fill="#f01838" points="324.5,305.0 327.0,307.5 324.5,310.0 322.0,307.5"/><polygon fill="#f01838" points="327.5,304.0 330.0,306.5 327.5,309.0 325.0,306.5"/><polygon fill="#f01838" points="330.5,304.0 333.0,306.5 330.5,309.0 328.0,306.5"/><polygon fill="#f01838" points="333.5,305.0 336.0,307.5 333.5,310.0 331.0,307.5"/><polygon fill="#f01838" points="337.5,305.0 340.0,307.5 337.5,310.0 335.0,307.5"/><polygon fill="#f01838" points="341.5,305.0 344.0,307.5 341.5,310.0 339.0,307.5"/><polygon fill="#f01838" points="344.5,304.0 347.0,306.5 344.5,309.0 342.0,306.5"/><polygon fill="#f01838" points="347.5,304.0 350.0,306.5 347.5,309.0 345.0,306.5"/><polygon fill="#f01838" points="351.5,305.0 354.0,307.5 351.5,310.0 349.0,307.5"/><polygon fill="#f01838" points="354.5,304.0 357.0,306.5 354.5,309.0 352.0,306.5"/><polygon fill="#f01838" points="356.5,304.0 359.0,306.5 356.5,309.0 354.0,306.5"/><polygon fill="#f01838" points="361.5,305.0 364.0,307.5 361.5,310.0 359.0,307.5"/><polygon fill="#f01838" points="364.5,305.0 367.0,307.5 364.5,310.0 362.0,307.5"/><polygon fill="#f01838" points="366.5,305.0 369.0,307.5 366.5,310.0 364.0,307.5"/><polygon fill="#f01838" points="370.5,305.0 373.0,307.5 370.5,310.0 368.0,307.5"/><polygon fill="#f01838" points="375.5,304.0 378.0,306.5 375.5,309.0 373.0,306.5"/><polygon fill="#f01838" points="377.5,304.0 380.0,306.5 377.5,309.0 375.0,306.5"/><polygon fill="#f01838" points="380.5,304.0 383.0,306.5 380.5,309.0 378.0,306.5"/><polygon fill="#f01838" points="384.5,304.0 387.0,306.5 384.5,309.0 382.0,306.5"/><polygon fill="#f01838" points="388.5,305.0 391.0,307.5 388.5,310.0 386.0,307.5"/><polygon fill="#f01838" points="390.5,305.0 393.0,307.5 390.5,310.0 388.0,307.5"/><polygon fill="#f01838" points="395.5,304.0 398.0,306.5 395.5,309.0 393.0,306.5"/><polygon fill="#f01838" points="397.5,304.0 400.0,306.5 397.5,309.0 395.0,306.5"/><polygon fill="#f01838" points="400.5,304.0 403.0,306.5 400.5,309.0 398.0,306.5"/><polygon fill="#f01838" points="404.5,303.0 407.0,305.5 404.5,308.0 402.0,305.5"/><polygon fill="#f01838" points="408.5,303.0 411.0,305.5 408.5,308.0 406.0,305.5"/><polygon fill="#f01838" points="411.5,305.0 414.0,307.5 411.5,310.0 409.0,307.5"/><polygon fill="#f01838" points="413.5,305.0 416.0,307.5 413.5,310.0 411.0,307.5"/><polygon fill="#f01838" points="417.5,305.0 420.0,307.5 417.5,310.0 415.0,307.5"/><polygon fill="#f01838" points="421.5,303.0 424.0,305.5 421.5,308.0 419.0,305.5"/><polygon fill="#f01838" points="424.5,305.0 427.0,307.5 424.5,310.0 422.0,307.5"/><polygon fill="#f01838" points="427.5,305.0 430.0,307.5 427.5,310.0 425.0,307.5"/><polygon fill="#f01838" points="432.5,305.0 435.0,307.5 432.5,310.0 430.0,307.5"/><polygon fill="#f01838" points="435.5,304.0 438.0,306.5 435.5,309.0 433.0,306.5"/><polygon fill="#f01838" points="438.5,304.0 441.0,306.5 438.5,309.0 436.0,306.5"/><polygon fill="#f01838" points="441.5,304.0 444.0,306.5 441.5,309.0 439.0,306.5"/><polygon fill="#f01838" points="445.5,305.0 448.0,307.5 445.5,310.0 443.0,307.5"/><polygon fill="#f01838" points="449.5,303.0 452.0,305.5 449.5,308.0 447.0,305.5"/><polygon fill="#f01838" points="452.5,304.0 455.0,306.5 452.5,309.0 450.0,306.5"/><polygon fill="#f01838" points="455.5,304.0 458.0,306.5 455.5,309.0 453.0,306.5"/><polygon fill="#f01838" points="458.5,305.0 461.0,307.5 458.5,310.0 456.0,307.5"/><polygon fill="#f01838" points="462.5,305.0 465.0,307.5 462.5,310.0 460.0,307.5"/><polygon fill="#f01838" points="465.5,305.0 468.0,307.5 465.5,310.0 463.0,307.5"/><polygon fill="#f01838" points="468.5,304.0 471.0,306.5 468.5,309.0 466.0,306.5"/><polygon fill="#f01838" points="471.5,305.0 474.0,307.5 471.5,310.0 469.0,307.5"/><polygon fill="#f01838" points="474.5,303.0 477.0,305.5 474.5,308.0 472.0,305.5"/><polygon fill="#f01838" points="477.5,303.0 480.0,305.5 477.5,308.0 475.0,305.5"/><polygon fill="#f01838" points="481.5,303.0 484.0,305.5 481.5,308.0 479.0,305.5"/><polygon fill="#f01838" points="484.5,303.0 487.0,305.5 484.5,308.0 482.0,305.5"/><polygon fill="#f01838" points="488.5,304.0 491.0,306.5 488.5,309.0 486.0,306.5"/><polygon fill="#f01838" points="491.5,304.0 494.0,306.5 491.5,309.0 489.0,306.5"/><polygon fill="#f01838" points="495.5,304.0 498.0,306.5 495.5,309.0 493.0,306.5"/><polygon fill="#f01838" points="498.5,303.0 501.0,305.5 498.5,308.0 496.0,305.5"/><polygon fill="#f01838" points="502.5,304.0 505.0,306.5 502.5,309.0 500.0,306.5"/><polygon fill="#f01838" points="506.5,305.0 509.0,307.5 506.5,310.0 504.0,307.5"/><polygon fill="#f01838" points="507.5,303.0 510.0,305.5 507.5,308.0 505.0,305.5"/><polygon fill="#f01838" points="512.5,303.0 515.0,305.5 512.5,308.0 510.0,305.5"/><polygon fill="#f01838" points="514.5,304.0 517.0,306.5 514.5,309.0 512.0,306.5"/><polygon fill="#f01838" points="518.5,304.0 521.0,306.5 518.5,309.0 516.0,306.5"/><polygon fill="#f01838" points="522.5,305.0 525.0,307.5 522.5,310.0 520.0,307.5"/><polygon fill="#f01838" points="524.5,303.0 527.0,305.5 524.5,308.0 522.0,305.5"/><polygon fill="#f01838" points="320.5,300.0 323.0,302.5 320.5,305.0 318.0,302.5"/></g>
<g><path fill="#5050f0" d="M88,303h1v2h2v1h-2v2h-1v-2h-2v-1h2z"/><path fill="#5050f0" d="M91,304h1v2h2v1h-2v2h-1v-2h-2v-1h2z"/><path fill="#5050f0" d="M94,303h1v2h2v1h-2v2h-1v-2h-2v-1h2z"/><path fill="#5050f0" d="M97,304h1v2h2v1h-2v2h-1v-2h-2v-1h2z"/><path fill="#5050f0" d="M103,304h1v2h2v1h-2v2h-1v-2h-2v-1h2z"/><path fill="#5050f0" d="M105,304h1v2h2v1h-2v2h-1v-2h-2v-1h2z"/><path fill="#5050f0" d="M107,303h1v2h2v1h-2v2h-1v-2h-2v-1h2z"/><path fill="#5050f0" d="M112,304h1v2h2v1h-2v2h-1v-2h-2v-1h2z"/><path fill="#5050f0" d="M115,304h1v2h2v1h-2v2h-1v-2h-2v-1h2z"/><path fill="#5050f0" d="M119,303h1v2h2v1h-2v2h-1v-2h-2v-1h2z"/><path fill="#5050f0" d="M121,304h1v2h2v1h-2v2h-1v-2h-2v-1h2z"/><path fill="#5050f0" d="M124,304h1v2h2v1h-2v2h-1v-2h-2v-1h2z"/><path fill="#5050f0" d="M129,304h1v2h2v1h-2v2h-1v-2h-2v-1h2z"/><path fill="#5050f0" d="M133,304h1v2h2v1h-2v2h-1v-2h-2v-1h2z"/><path fill="#5050f0" d="M135,303h1v2h2v1h-2v2h-1v-2h-2v-1h2z"/><path fill="#5050f0" d="M139,304h1v2h2v1h-2v2h-1v-2h-2v-1h2z"/><path fill="#5050f0" d="M143,303h1v2h2v1h-2v2h-1v-2h-2v-1h2z"/><path fill="#5050f0" d="M145,304h1v2h2v1h-2v2h-1v-2h-2v-1h2z"/><path fill="#5050f0" d="M148,304h1v2h2v1h-2v2h-1v-2h-2v-1h2z"/><path fill="#5050f0" d="M152,304h1v2h2v1h-2v2h-1v-2h-2v-1h2z"/><path fill="#5050f0" d="M155,304h1v2h2v1h-2v2h-1v-2h-2v-1h2z"/><path fill="#5050f0" d="M159,304h1v2h2v1h-2v2h-1v-2h-2v-1h2z"/><path fill="#5050f0" d="M162,303h1v2h2v1h-2v2h-1v-2h-2v-1h2z"/><path fill="#5050f0" d="M165,304h1v2h2v1h-2v2h-1v-2h-2v-1h2z"/><path fill="#5050f0" d="M169,304h1v2h2v1h-2v2h-1v-2h-2v-1h2z"/><path fill="#5050f0" d="M172,304h1v2h2v1h-2v2h-1v-2h-2v-1h2z"/><path fill="#5050f0" d="M175,303h1v2h2v1h-2v2h-1v-2h-2v-1h2z"/><path fill="#5050f0" d="M178,303h1v2h2v1h-2v2h-1v-2h-2v-1h2z"/><path fill="#5050f0" d="M182,304h1v2h2v1h-2v2h-1v-2h-2v-1h2z"/><path fill="#5050f0" d="M185,304h1v2h2v1h-2v2h-1v-2h-2v-1h2z"/><path fill="#5050f0" d="M188,304h1v2h2v1h-2v2h-1v-2h-2v-1h2z"/><path fill="#5050f0" d="M192,304h1v2h2v1h-2v2h-1v-2h-2v-1h2z"/><path fill="#5050f0" d="M195,303h1v2h2v1h-2v2h-1v-2h-2v-1h2z"/><path fill="#5050f0" d="M200,304h1v2h2v1h-2v2h-1v-2h-2v-1h2z"/><path fill="#5050f0" d="M203,304h1v2h2v1h-2v2h-1v-2h-2v-1h2z"/><path fill="#5050f0" d="M206,303h1v2h2v1h-2v2h-1v-2h-2v-1h2z"/><path fill="#5050f0" d="M209,303h1v2h2v1h-2v2h-1v-2h-2v-1h2z"/><path fill="#5050f0" d="M213,303h1v2h2v1h-2v2h-1v-2h-2v-1h2z"/><path fill="#5050f0" d="M216,304h1v2h2v1h-2v2h-1v-2h-2v-1h2z"/><path fill="#5050f0" d="M220,304h1v2h2v1h-2v2h-1v-2h-2v-1h2z"/><path fill="#5050f0" d="M223,304h1v2h2v1h-2v2h-1v-2h-2v-1h2z"/><path fill="#5050f0" d="M226,304h1v2h2v1h-2v2h-1v-2h-2v-1h2z"/><path fill="#5050f0" d="M229,304h1v2h2v1h-2v2h-1v-2h-2v-1h2z"/><path fill="#5050f0" d="M232,303h1v2h2v1h-2v2h-1v-2h-2v-1h2z"/><path fill="#5050f0" d="M235,303h1v2h2v1h-2v2h-1v-2h-2v-1h2z"/><path fill="#5050f0" d="M239,304h1v2h2v1h-2v2h-1v-2h-2v-1h2z"/><path fill="#5050f0" d="M243,304h1v2h2v1h-2v2h-1v-2h-2v-1h2z"/><path fill="#5050f0" d="M246,304h1v2h2v1h-2v2h-1v-2h-2v-1h2z"/><path fill="#5050f0" d="M249,304h1v2h2v1h-2v2h-1v-2h-2v-1h2z"/><path fill="#5050f0" d="M254,304h1v2h2v1h-2v2h-1v-2h-2v-1h2z"/><path fill="#5050f0" d="M256,304h1v2h2v1h-2v2h-1v-2h-2v-1h2z"/><path fill="#5050f0" d="M259,304h1v2h2v1h-2v2h-1v-2h-2v-1h2z"/><path fill="#5050f0" d="M263,304h1v2h2v1h-2v2h-1v-2h-2v-1h2z"/><path fill="#5050f0" d="M267,304h1v2h2v1h-2v2h-1v-2h-2v-1h2z"/><path fill="#5050f0" d="M271,304h1v2h2v1h-2v2h-1v-2h-2v-1h2z"/><path fill="#5050f0" d="M273,304h1v2h2v1h-2v2h-1v-2h-2v-1h2z"/><path fill="#5050f0" d="M277,304h1v2h2v1h-2v2h-1v-2h-2v-1h2z"/><path fill="#5050f0" d="M280,304h1v2h2v1h-2v2h-1v-2h-2v-1h2z"/><path fill="#5050f0" d="M282,304h1v2h2v1h-2v2h-1v-2h-2v-1h2z"/><path fill="#5050f0" d="M286,304h1v2h2v1h-2v2h-1v-2h-2v-1h2z"/><path fill="#5050f0" d="M289,304h1v2h2v1h-2v2h-1v-2h-2v-1h2z"/><path fill="#5050f0" d="M293,304h1v2h2v1h-2v2h-1v-2h-2v-1h2z"/><path fill="#5050f0" d="M296,304h1v2h2v1h-2v2h-1v-2h-2v-1h2z"/><path fill="#5050f0" d="M299,304h1v2h2v1h-2v2h-1v-2h-2v-1h2z"/><path fill="#5050f0" d="M303,304h1v2h2v1h-2v2h-1v-2h-2v-1h2z"/><path fill="#5050f0" d="M306,304h1v2h2v1h-2v2h-1v-2h-2v-1h2z"/><path fill="#5050f0" d="M309,304h1v2h2v1h-2v2h-1v-2h-2v-1h2z"/><path fill="#5050f0" d="M313,304h1v2h2v1h-2v2h-1v-2h-2v-1h2z"/><path fill="#5050f0" d="M317,304h1v2h2v1h-2v2h-1v-2h-2v-1h2z"/><path fill="#5050f0" d="M320,304h1v2h2v1h-2v2h-1v-2h-2v-1h2z"/><path fill="#5050f0" d="M323,304h1v2h2v1h-2v2h-1v-2h-2v-1h2z"/><path fill="#5050f0" d="M326,304h1v2h2v1h-2v2h-1v-2h-2v-1h2z"/><path fill="#5050f0" d="M329,304h1v2h2v1h-2v2h-1v-2h-2v-1h2z"/><path fill="#5050f0" d="M334,303h1v2h2v1h-2v2h-1v-2h-2v-1h2z"/><path fill="#5050f0" d="M336,304h1v2h2v1h-2v2h-1v-2h-2v-1h2z"/><path fill="#5050f0" d="M341,304h1v2h2v1h-2v2h-1v-2h-2v-1h2z"/><path fill="#5050f0" d="M343,303h1v2h2v1h-2v2h-1v-2h-2v-1h2z"/><path fill="#5050f0" d="M347,304h1v2h2v1h-2v2h-1v-2h-2v-1h2z"/><path fill="#5050f0" d="M349,303h1v2h2v1h-2v2h-1v-2h-2v-1h2z"/><path fill="#5050f0" d="M353,304h1v2h2v1h-2v2h-1v-2h-2v-1h2z"/><path fill="#5050f0" d="M357,304h1v2h2v1h-2v2h-1v-2h-2v-1h2z"/><path fill="#5050f0" d="M360,304h1v2h2v1h-2v2h-1v-2h-2v-1h2z"/><path fill="#5050f0" d="M363,304h1v2h2v1h-2v2h-1v-2h-2v-1h2z"/><path fill="#5050f0" d="M367,304h1v2h2v1h-2v2h-1v-2h-2v-1h2z"/><path fill="#5050f0" d="M371,304h1v2h2v1h-2v2h-1v-2h-2v-1h2z"/><path fill="#5050f0" d="M374,304h1v2h2v1h-2v2h-1v-2h-2v-1h2z"/><path fill="#5050f0" d="M378,304h1v2h2v1h-2v2h-1v-2h-2v-1h2z"/><path fill="#5050f0" d="M380,303h1v2h2v1h-2v2h-1v-2h-2v-1h2z"/><path fill="#5050f0" d="M384,303h1v2h2v1h-2v2h-1v-2h-2v-1h2z"/><path fill="#5050f0" d="M387,304h1v2h2v1h-2v2h-1v-2h-2v-1h2z"/><path fill="#5050f0" d="M391,304h1v2h2v1h-2v2h-1v-2h-2v-1h2z"/><path fill="#5050f0" d="M394,304h1v2h2v1h-2v2h-1v-2h-2v-1h2z"/><path fill="#5050f0" d="M397,303h1v2h2v1h-2v2h-1v-2h-2v-1h2z"/><path fill="#5050f0" d="M401,303h1v2h2v1h-2v2h-1v-2h-2v-1h2z"/><path fill="#5050f0" d="M405,304h1v2h2v1h-2v2h-1v-2h-2v-1h2z"/><path fill="#5050f0" d="M407,304h1v2h2v1h-2v2h-1v-2h-2v-1h2z"/><path fill="#5050f0" d="M410,304h1v2h2v1h-2v2h-1v-2h-2v-1h2z"/><path fill="#5050f0" d="M414,304h1v2h2v1h-2v2h-1v-2h-2v-1h2z"/><path fill="#5050f0" d="M417,304h1v2h2v1h-2v2h-1v-2h-2v-1h2z"/><path fill="#5050f0" d="M420,304h1v2h2v1h-2v2h-1v-2h-2v-1h2z"/><path fill="#5050f0" d="M425,303h1v2h2v1h-2v2h-1v-2h-2v-1h2z"/><path fill="#5050f0" d="M428,304h1v2h2v1h-2v2h-1v-2h-2v-1h2z"/><path fill="#5050f0" d="M432,304h1v2h2v1h-2v2h-1v-2h-2v-1h2z"/><path fill="#5050f0" d="M434,303h1v2h2v1h-2v2h-1v-2h-2v-1h2z"/><path fill="#5050f0" d="M437,303h1v2h2v1h-2v2h-1v-2h-2v-1h2z"/><path fill="#5050f0" d="M442,303h1v2h2v1h-2v2h-1v-2h-2v-1h2z"/><path fill="#5050f0" d="M445,304h1v2h2v1h-2v2h-1v-2h-2v-1h2z"/><path fill="#5050f0" d="M448,304h1v2h2v1h-2v2h-1v-2h-2v-1h2z"/><path fill="#5050f0" d="M451,303h1v2h2v1h-2v2h-1v-2h-2v-1h2z"/><path fill="#5050f0" d="M455,304h1v2h2v1h-2v2h-1v-2h-2v-1h2z"/><path fill="#5050f0" d="M459,304h1v2h2v1h-2v2h-1v-2h-2v-1h2z"/><path fill="#5050f0" d="M462,303h1v2h2v1h-2v2h-1v-2h-2v-1h2z"/><path fill="#5050f0" d="M465,304h1v2h2v1h-2v2h-1v-2h-2v-1h2z"/><path fill="#5050f0" d="M467,303h1v2h2v1h-2v2h-1v-2h-2v-1h2z"/><path fill="#5050f0" d="M471,304h1v2h2v1h-2v2h-1v-2h-2v-1h2z"/><path fill="#5050f0" d="M474,304h1v2h2v1h-2v2h-1v-2h-2v-1h2z"/><path fill="#5050f0" d="M477,304h1v2h2v1h-2v2h-1v-2h-2v-1h2z"/><path fill="#5050f0" d="M481,303h1v2h2v1h-2v2h-1v-2h-2v-1h2z"/><path fill="#5050f0" d="M484,304h1v2h2v1h-2v2h-1v-2h-2v-1h2z"/><path fill="#5050f0" d="M488,304h1v2h2v1h-2v2h-1v-2h-2v-1h2z"/><path fill="#5050f0" d="M491,304h1v2h2v1h-2v2h-1v-2h-2v-1h2z"/><path fill="#5050f0" d="M495,303h1v2h2v1h-2v2h-1v-2h-2v-1h2z"/><path fill="#5050f0" d="M499,303h1v2h2v1h-2v2h-1v-2h-2v-1h2z"/><path fill="#5050f0" d="M501,304h1v2h2v1h-2v2h-1v-2h-2v-1h2z"/><path fill="#5050f0" d="M504,304h1v2h2v1h-2v2h-1v-2h-2v-1h2z"/><path fill="#5050f0" d="M507,304h1v2h2v1h-2v2h-1v-2h-2v-1h2z"/><path fill="#5050f0" d="M511,303h1v2h2v1h-2v2h-1v-2h-2v-1h2z"/><path fill="#5050f0" d="M514,303h1v2h2v1h-2v2h-1v-2h-2v-1h2z"/><path fill="#5050f0" d="M519,304h1v2h2v1h-2v2h-1v-2h-2v-1h2z"/><path fill="#5050f0" d="M521,304h1v2h2v1h-2v2h-1v-2h-2v-1h2z"/><path fill="#5050f0" d="M524,304h1v2h2v1h-2v2h-1v-2h-2v-1h2z"/></g>
<g><path fill="#30e830" d="M88,292h3v1h1v3h-1v1h-3v-1h-1v-3h1z M88,293v3h3v-3z" fill-rule="evenodd"/><path fill="#30e830" d="M90,292h3v1h1v3h-1v1h-3v-1h-1v-3h1z M90,293v3h3v-3z" fill-rule="evenodd"/><path fill="#30e830" d="M93,292h3v1h1v3h-1v1h-3v-1h-1v-3h1z M93,293v3h3v-3z" fill-rule="evenodd"/><path fill="#30e830" d="M97,292h3v1h1v3h-1v1h-3v-1h-1v-3h1z M97,293v3h3v-3z" fill-rule="evenodd"/><path fill="#30e830" d="M101,293h3v1h1v3h-1v1h-3v-1h-1v-3h1z M101,294v3h3v-3z" fill-rule="evenodd"/><path fill="#30e830" d="M104,293h3v1h1v3h-1v1h-3v-1h-1v-3h1z M104,294v3h3v-3z" fill-rule="evenodd"/><path fill="#30e830" d="M108,293h3v1h1v3h-1v1h-3v-1h-1v-3h1z M108,294v3h3v-3z" fill-rule="evenodd"/><path fill="#30e830" d="M111,292h3v1h1v3h-1v1h-3v-1h-1v-3h1z M111,293v3h3v-3z" fill-rule="evenodd"/><path fill="#30e830" d="M114,292h3v1h1v3h-1v1h-3v-1h-1v-3h1z M114,293v3h3v-3z" fill-rule="evenodd"/><path fill="#30e830" d="M117,292h3v1h1v3h-1v1h-3v-1h-1v-3h1z M117,293v3h3v-3z" fill-rule="evenodd"/><path fill="#30e830" d="M120,293h3v1h1v3h-1v1h-3v-1h-1v-3h1z M120,294v3h3v-3z" fill-rule="evenodd"/><path fill="#30e830" d="M123,292h3v1h1v3h-1v1h-3v-1h-1v-3h1z M123,293v3h3v-3z" fill-rule="evenodd"/><path fill="#30e830" d="M127,292h3v1h1v3h-1v1h-3v-1h-1v-3h1z M127,293v3h3v-3z" fill-rule="evenodd"/><path fill="#30e830" d="M131,293h3v1h1v3h-1v1h-3v-1h-1v-3h1z M131,294v3h3v-3z" fill-rule="evenodd"/><path fill="#30e830" d="M135,293h3v1h1v3h-1v1h-3v-1h-1v-3h1z M135,294v3h3v-3z" fill-rule="evenodd"/><path fill="#30e830" d="M138,292h3v1h1v3h-1v1h-3v-1h-1v-3h1z M138,293v3h3v-3z" fill-rule="evenodd"/><path fill="#30e830" d="M142,292h3v1h1v3h-1v1h-3v-1h-1v-3h1z M142,293v3h3v-3z" fill-rule="evenodd"/><path fill="#30e830" d="M144,293h3v1h1v3h-1v1h-3v-1h-1v-3h1z M144,294v3h3v-3z" fill-rule="evenodd"/><path fill="#30e830" d="M148,292h3v1h1v3h-1v1h-3v-1h-1v-3h1z M148,293v3h3v-3z" fill-rule="evenodd"/><path fill="#30e830" d="M151,293h3v1h1v3h-1v1h-3v-1h-1v-3h1z M151,294v3h3v-3z" fill-rule="evenodd"/><path fill="#30e830" d="M154,292h3v1h1v3h-1v1h-3v-1h-1v-3h1z M154,293v3h3v-3z" fill-rule="evenodd"/><path fill="#30e830" d="M158,292h3v1h1v3h-1v1h-3v-1h-1v-3h1z M158,293v3h3v-3z" fill-rule="evenodd"/><path fill="#30e830" d="M161,292h3v1h1v3h-1v1h-3v-1h-1v-3h1z M161,293v3h3v-3z" fill-rule="evenodd"/><path fill="#30e830" d="M164,292h3v1h1v3h-1v1h-3v-1h-1v-3h1z M164,293v3h3v-3z" fill-rule="evenodd"/><path fill="#30e830" d="M167,292h3v1h1v3h-1v1h-3v-1h-1v-3h1z M167,293v3h3v-3z" fill-rule="evenodd"/><path fill="#30e830" d="M171,293h3v1h1v3h-1v1h-3v-1h-1v-3h1z M171,294v3h3v-3z" fill-rule="evenodd"/><path fill="#30e830" d="M174,292h3v1h1v3h-1v1h-3v-1h-1v-3h1z M174,293v3h3v-3z" fill-rule="evenodd"/><path fill="#30e830" d="M177,293h3v1h1v3h-1v1h-3v-1h-1v-3h1z M177,294v3h3v-3z" fill-rule="evenodd"/><path fill="#30e830" d="M182,292h3v1h1v3h-1v1h-3v-1h-1v-3h1z M182,293v3h3v-3z" fill-rule="evenodd"/><path fill="#30e830" d="M184,293h3v1h1v3h-1v1h-3v-1h-1v-3h1z M184,294v3h3v-3z" fill-rule="evenodd"/><path fill="#30e830" d="M188,292h3v1h1v3h-1v1h-3v-1h-1v-3h1z M188,293v3h3v-3z" fill-rule="evenodd"/><path fill="#30e830" d="M191,292h3v1h1v3h-1v1h-3v-1h-1v-3h1z M191,293v3h3v-3z" fill-rule="evenodd"/><path fill="#30e830" d="M196,292h3v1h1v3h-1v1h-3v-1h-1v-3h1z M196,293v3h3v-3z" fill-rule="evenodd"/><path fill="#30e830" d="M198,292h3v1h1v3h-1v1h-3v-1h-1v-3h1z M198,293v3h3v-3z" fill-rule="evenodd"/><path fill="#30e830" d="M201,292h3v1h1v3h-1v1h-3v-1h-1v-3h1z M201,293v3h3v-3z" fill-rule="evenodd"/><path fill="#30e830" d="M204,292h3v1h1v3h-1v1h-3v-1h-1v-3h1z M204,293v3h3v-3z" fill-rule="evenodd"/><path fill="#30e830" d="M208,293h3v1h1v3h-1v1h-3v-1h-1v-3h1z M208,294v3h3v-3z" fill-rule="evenodd"/><path fill="#30e830" d="M211,292h3v1h1v3h-1v1h-3v-1h-1v-3h1z M211,293v3h3v-3z" fill-rule="evenodd"/><path fill="#30e830" d="M215,292h3v1h1v3h-1v1h-3v-1h-1v-3h1z M215,293v3h3v-3z" fill-rule="evenodd"/><path fill="#30e830" d="M218,292h3v1h1v3h-1v1h-3v-1h-1v-3h1z M218,293v3h3v-3z" fill-rule="evenodd"/><path fill="#30e830" d="M222,292h3v1h1v3h-1v1h-3v-1h-1v-3h1z M222,293v3h3v-3z" fill-rule="evenodd"/><path fill="#30e830" d="M224,292h3v1h1v3h-1v1h-3v-1h-1v-3h1z M224,293v3h3v-3z" fill-rule="evenodd"/><path fill="#30e830" d="M227,292h3v1h1v3h-1v1h-3v-1h-1v-3h1z M227,293v3h3v-3z" fill-rule="evenodd"/><path fill="#30e830" d="M231,292h3v1h1v3h-1v1h-3v-1h-1v-3h1z M231,293v3h3v-3z" fill-rule="evenodd"/><path fill="#30e830" d="M235,293h3v1h1v3h-1v1h-3v-1h-1v-3h1z M235,294v3h3v-3z" fill-rule="evenodd"/><path fill="#30e830" d="M239,292h3v1h1v3h-1v1h-3v-1h-1v-3h1z M239,293v3h3v-3z" fill-rule="evenodd"/><path fill="#30e830" d="M241,292h3v1h1v3h-1v1h-3v-1h-1v-3h1z M241,293v3h3v-3z" fill-rule="evenodd"/><path fill="#30e830" d="M244,292h3v1h1v3h-1v1h-3v-1h-1v-3h1z M244,293v3h3v-3z" fill-rule="evenodd"/><path fill="#30e830" d="M249,293h3v1h1v3h-1v1h-3v-1h-1v-3h1z M249,294v3h3v-3z" fill-rule="evenodd"/><path fill="#30e830" d="M251,292h3v1h1v3h-1v1h-3v-1h-1v-3h1z M251,293v3h3v-3z" fill-rule="evenodd"/><path fill="#30e830" d="M256,292h3v1h1v3h-1v1h-3v-1h-1v-3h1z M256,293v3h3v-3z" fill-rule="evenodd"/><path fill="#30e830" d="M259,292h3v1h1v3h-1v1h-3v-1h-1v-3h1z M259,293v3h3v-3z" fill-rule="evenodd"/><path fill="#30e830" d="M261,292h3v1h1v3h-1v1h-3v-1h-1v-3h1z M261,293v3h3v-3z" fill-rule="evenodd"/><path fill="#30e830" d="M264,292h3v1h1v3h-1v1h-3v-1h-1v-3h1z M264,293v3h3v-3z" fill-rule="evenodd"/><path fill="#30e830" d="M269,292h3v1h1v3h-1v1h-3v-1h-1v-3h1z M269,293v3h3v-3z" fill-rule="evenodd"/><path fill="#30e830" d="M272,293h3v1h1v3h-1v1h-3v-1h-1v-3h1z M272,294v3h3v-3z" fill-rule="evenodd"/><path fill="#30e830" d="M276,292h3v1h1v3h-1v1h-3v-1h-1v-3h1z M276,293v3h3v-3z" fill-rule="evenodd"/><path fill="#30e830" d="M278,292h3v1h1v3h-1v1h-3v-1h-1v-3h1z M278,293v3h3v-3z" fill-rule="evenodd"/><path fill="#30e830" d="M282,292h3v1h1v3h-1v1h-3v-1h-1v-3h1z M282,293v3h3v-3z" fill-rule="evenodd"/><path fill="#30e830" d="M285,292h3v1h1v3h-1v1h-3v-1h-1v-3h1z M285,293v3h3v-3z" fill-rule="evenodd"/><path fill="#30e830" d="M289,292h3v1h1v3h-1v1h-3v-1h-1v-3h1z M289,293v3h3v-3z" fill-rule="evenodd"/><path fill="#30e830" d="M292,292h3v1h1v3h-1v1h-3v-1h-1v-3h1z M292,293v3h3v-3z" fill-rule="evenodd"/><path fill="#30e830" d="M296,292h3v1h1v3h-1v1h-3v-1h-1v-3h1z M296,293v3h3v-3z" fill-rule="evenodd"/><path fill="#30e830" d="M299,293h3v1h1v3h-1v1h-3v-1h-1v-3h1z M299,294v3h3v-3z" fill-rule="evenodd"/><path fill="#30e830" d="M303,292h3v1h1v3h-1v1h-3v-1h-1v-3h1z M303,293v3h3v-3z" fill-rule="evenodd"/><path fill="#30e830" d="M305,292h3v1h1v3h-1v1h-3v-1h-1v-3h1z M305,293v3h3v-3z" fill-rule="evenodd"/><path fill="#30e830" d="M308,293h3v1h1v3h-1v1h-3v-1h-1v-3h1z M308,294v3h3v-3z" fill-rule="evenodd"/><path fill="#30e830" d="M312,292h3v1h1v3h-1v1h-3v-1h-1v-3h1z M312,293v3h3v-3z" fill-rule="evenodd"/><path fill="#30e830" d="M316,292h3v1h1v3h-1v1h-3v-1h-1v-3h1z M316,293v3h3v-3z" fill-rule="evenodd"/><path fill="#30e830" d="M320,292h3v1h1v3h-1v1h-3v-1h-1v-3h1z M320,293v3h3v-3z" fill-rule="evenodd"/><path fill="#30e830" d="M322,292h3v1h1v3h-1v1h-3v-1h-1v-3h1z M322,293v3h3v-3z" fill-rule="evenodd"/><path fill="#30e830" d="M325,292h3v1h1v3h-1v1h-3v-1h-1v-3h1z M325,293v3h3v-3z" fill-rule="evenodd"/><path fill="#30e830" d="M329,292h3v1h1v3h-1v1h-3v-1h-1v-3h1z M329,293v3h3v-3z" fill-rule="evenodd"/><path fill="#30e830" d="M332,292h3v1h1v3h-1v1h-3v-1h-1v-3h1z M332,293v3h3v-3z" fill-rule="evenodd"/><path fill="#30e830" d="M337,292h3v1h1v3h-1v1h-3v-1h-1v-3h1z M337,293v3h3v-3z" fill-rule="evenodd"/><path fill="#30e830" d="M340,292h3v1h1v3h-1v1h-3v-1h-1v-3h1z M340,293v3h3v-3z" fill-rule="evenodd"/><path fill="#30e830" d="M343,292h3v1h1v3h-1v1h-3v-1h-1v-3h1z M343,293v3h3v-3z" fill-rule="evenodd"/><path fill="#30e830" d="M345,292h3v1h1v3h-1v1h-3v-1h-1v-3h1z M345,293v3h3v-3z" fill-rule="evenodd"/><path fill="#30e830" d="M350,292h3v1h1v3h-1v1h-3v-1h-1v-3h1z M350,293v3h3v-3z" fill-rule="evenodd"/><path fill="#30e830" d="M352,292h3v1h1v3h-1v1h-3v-1h-1v-3h1z M352,293v3h3v-3z" fill-rule="evenodd"/><path fill="#30e830" d="M355,292h3v1h1v3h-1v1h-3v-1h-1v-3h1z M355,293v3h3v-3z" fill-rule="evenodd"/><path fill="#30e830" d="M360,292h3v1h1v3h-1v1h-3v-1h-1v-3h1z M360,293v3h3v-3z" fill-rule="evenodd"/><path fill="#30e830" d="M363,292h3v1h1v3h-1v1h-3v-1h-1v-3h1z M363,293v3h3v-3z" fill-rule="evenodd"/><path fill="#30e830" d="M365,293h3v1h1v3h-1v1h-3v-1h-1v-3h1z M365,294v3h3v-3z" fill-rule="evenodd"/><path fill="#30e830" d="M369,292h3v1h1v3h-1v1h-3v-1h-1v-3h1z M369,293v3h3v-3z" fill-rule="evenodd"/><path fill="#30e830" d="M373,292h3v1h1v3h-1v1h-3v-1h-1v-3h1z M373,293v3h3v-3z" fill-rule="evenodd"/><path fill="#30e830" d="M377,293h3v1h1v3h-1v1h-3v-1h-1v-3h1z M377,294v3h3v-3z" fill-rule="evenodd"/><path fill="#30e830" d="M379,292h3v1h1v3h-1v1h-3v-1h-1v-3h1z M379,293v3h3v-3z" fill-rule="evenodd"/><path fill="#30e830" d="M382,292h3v1h1v3h-1v1h-3v-1h-1v-3h1z M382,293v3h3v-3z" fill-rule="evenodd"/><path fill="#30e830" d="M386,292h3v1h1v3h-1v1h-3v-1h-1v-3h1z M386,293v3h3v-3z" fill-rule="evenodd"/><path fill="#30e830" d="M390,292h3v1h1v3h-1v1h-3v-1h-1v-3h1z M390,293v3h3v-3z" fill-rule="evenodd"/><path fill="#30e830" d="M393,292h3v1h1v3h-1v1h-3v-1h-1v-3h1z M393,293v3h3v-3z" fill-rule="evenodd"/><path fill="#30e830" d="M397,292h3v1h1v3h-1v1h-3v-1h-1v-3h1z M397,293v3h3v-3z" fill-rule="evenodd"/><path fill="#30e830" d="M400,292h3v1h1v3h-1v1h-3v-1h-1v-3h1z M400,293v3h3v-3z" fill-rule="evenodd"/><path fill="#30e830" d="M404,292h3v1h1v3h-1v1h-3v-1h-1v-3h1z M404,293v3h3v-3z" fill-rule="evenodd"/><path fill="#30e830" d="M406,292h3v1h1v3h-1v1h-3v-1h-1v-3h1z M406,293v3h3v-3z" fill-rule="evenodd"/><path fill="#30e830" d="M409,293h3v1h1v3h-1v1h-3v-1h-1v-3h1z M409,294v3h3v-3z" fill-rule="evenodd"/><path fill="#30e830" d="M413,292h3v1h1v3h-1v1h-3v-1h-1v-3h1z M413,293v3h3v-3z" fill-rule="evenodd"/><path fill="#30e830" d="M417,292h3v1h1v3h-1v1h-3v-1h-1v-3h1z M417,293v3h3v-3z" fill-rule="evenodd"/><path fill="#30e830" d="M419,292h3v1h1v3h-1v1h-3v-1h-1v-3h1z M419,293v3h3v-3z" fill-rule="evenodd"/><path fill="#30e830" d="M423,293h3v1h1v3h-1v1h-3v-1h-1v-3h1z M423,294v3h3v-3z" fill-rule="evenodd"/><path fill="#30e830" d="M426,292h3v1h1v3h-1v1h-3v-1h-1v-3h1z M426,293v3h3v-3z" fill-rule="evenodd"/><path fill="#30e830" d="M431,292h3v1h1v3h-1v1h-3v-1h-1v-3h1z M431,293v3h3v-3z" fill-rule="evenodd"/><path fill="#30e830" d="M434,292h3v1h1v3h-1v1h-3v-1h-1v-3h1z M434,293v3h3v-3z" fill-rule="evenodd"/><path fill="#30e830" d="M437,292h3v1h1v3h-1v1h-3v-1h-1v-3h1z M437,293v3h3v-3z" fill-rule="evenodd"/><path fill="#30e830" d="M439,293h3v1h1v3h-1v1h-3v-1h-1v-3h1z M439,294v3h3v-3z" fill-rule="evenodd"/><path fill="#30e830" d="M443,293h3v1h1v3h-1v1h-3v-1h-1v-3h1z M443,294v3h3v-3z" fill-rule="evenodd"/><path fill="#30e830" d="M447,292h3v1h1v3h-1v1h-3v-1h-1v-3h1z M447,293v3h3v-3z" fill-rule="evenodd"/><path fill="#30e830" d="M449,293h3v1h1v3h-1v1h-3v-1h-1v-3h1z M449,294v3h3v-3z" fill-rule="evenodd"/><path fill="#30e830" d="M453,292h3v1h1v3h-1v1h-3v-1h-1v-3h1z M453,293v3h3v-3z" fill-rule="evenodd"/><path fill="#30e830" d="M458,292h3v1h1v3h-1v1h-3v-1h-1v-3h1z M458,293v3h3v-3z" fill-rule="evenodd"/><path fill="#30e830" d="M460,293h3v1h1v3h-1v1h-3v-1h-1v-3h1z M460,294v3h3v-3z" fill-rule="evenodd"/><path fill="#30e830" d="M463,293h3v1h1v3h-1v1h-3v-1h-1v-3h1z M463,294v3h3v-3z" fill-rule="evenodd"/><path fill="#30e830" d="M466,292h3v1h1v3h-1v1h-3v-1h-1v-3h1z M466,293v3h3v-3z" fill-rule="evenodd"/><path fill="#30e830" d="M471,292h3v1h1v3h-1v1h-3v-1h-1v-3h1z M471,293v3h3v-3z" fill-rule="evenodd"/><path fill="#30e830" d="M473,293h3v1h1v3h-1v1h-3v-1h-1v-3h1z M473,294v3h3v-3z" fill-rule="evenodd"/><path fill="#30e830" d="M478,292h3v1h1v3h-1v1h-3v-1h-1v-3h1z M478,293v3h3v-3z" fill-rule="evenodd"/><path fill="#30e830" d="M479,292h3v1h1v3h-1v1h-3v-1h-1v-3h1z M479,293v3h3v-3z" fill-rule="evenodd"/><path fill="#30e830" d="M483,292h3v1h1v3h-1v1h-3v-1h-1v-3h1z M483,293v3h3v-3z" fill-rule="evenodd"/><path fill="#30e830" d="M487,293h3v1h1v3h-1v1h-3v-1h-1v-3h1z M487,294v3h3v-3z" fill-rule="evenodd"/><path fill="#30e830" d="M490,292h3v1h1v3h-1v1h-3v-1h-1v-3h1z M490,293v3h3v-3z" fill-rule="evenodd"/><path fill="#30e830" d="M494,292h3v1h1v3h-1v1h-3v-1h-1v-3h1z M494,293v3h3v-3z" fill-rule="evenodd"/><path fill="#30e830" d="M496,292h3v1h1v3h-1v1h-3v-1h-1v-3h1z M496,293v3h3v-3z" fill-rule="evenodd"/><path fill="#30e830" d="M500,292h3v1h1v3h-1v1h-3v-1h-1v-3h1z M500,293v3h3v-3z" fill-rule="evenodd"/><path fill="#30e830" d="M503,292h3v1h1v3h-1v1h-3v-1h-1v-3h1z M503,293v3h3v-3z" fill-rule="evenodd"/><path fill="#30e830" d="M507,292h3v1h1v3h-1v1h-3v-1h-1v-3h1z M507,293v3h3v-3z" fill-rule="evenodd"/><path fill="#30e830" d="M510,292h3v1h1v3h-1v1h-3v-1h-1v-3h1z M510,293v3h3v-3z" fill-rule="evenodd"/><path fill="#30e830" d="M513,292h3v1h1v3h-1v1h-3v-1h-1v-3h1z M513,293v3h3v-3z" fill-rule="evenodd"/><path fill="#30e830" d="M518,292h3v1h1v3h-1v1h-3v-1h-1v-3h1z M518,293v3h3v-3z" fill-rule="evenodd"/><path fill="#30e830" d="M521,293h3v1h1v3h-1v1h-3v-1h-1v-3h1z M521,294v3h3v-3z" fill-rule="evenodd"/></g>
<g><rect x="86.5" y="291.5" width="4" height="4" fill="none" stroke="#ffffff" stroke-width="1"/><rect x="89.5" y="291.5" width="4" height="4" fill="none" stroke="#ffffff" stroke-width="1"/><rect x="93.5" y="292.5" width="4" height="4" fill="none" stroke="#ffffff" stroke-width="1"/><rect x="96.5" y="291.5" width="4" height="4" fill="none" stroke="#ffffff" stroke-width="1"/><rect x="99.5" y="291.5" width="4" height="4" fill="none" stroke="#ffffff" stroke-width="1"/><rect x="102.5" y="291.5" width="4" height="4" fill="none" stroke="#ffffff" stroke-width="1"/><rect x="107.5" y="291.5" width="4" height="4" fill="none" stroke="#ffffff" stroke-width="1"/><rect x="110.5" y="291.5" width="4" height="4" fill="none" stroke="#ffffff" stroke-width="1"/><rect x="113.5" y="291.5" width="4" height="4" fill="none" stroke="#ffffff" stroke-width="1"/><rect x="117.5" y="291.5" width="4" height="4" fill="none" stroke="#ffffff" stroke-width="1"/><rect x="120.5" y="292.5" width="4" height="4" fill="none" stroke="#ffffff" stroke-width="1"/><rect x="123.5" y="292.5" width="4" height="4" fill="none" stroke="#ffffff" stroke-width="1"/><rect x="126.5" y="291.5" width="4" height="4" fill="none" stroke="#ffffff" stroke-width="1"/><rect x="129.5" y="291.5" width="4" height="4" fill="none" stroke="#ffffff" stroke-width="1"/><rect x="132.5" y="291.5" width="4" height="4" fill="none" stroke="#ffffff" stroke-width="1"/><rect x="136.5" y="291.5" width="4" height="4" fill="none" stroke="#ffffff" stroke-width="1"/><rect x="141.5" y="291.5" width="4" height="4" fill="none" stroke="#ffffff" stroke-width="1"/><rect x="143.5" y="291.5" width="4" height="4" fill="none" stroke="#ffffff" stroke-width="1"/><rect x="146.5" y="291.5" width="4" height="4" fill="none" stroke="#ffffff" stroke-width="1"/><rect x="149.5" y="292.5" width="4" height="4" fill="none" stroke="#ffffff" stroke-width="1"/><rect x="153.5" y="291.5" width="4" height="4" fill="none" stroke="#ffffff" stroke-width="1"/><rect x="157.5" y="292.5" width="4" height="4" fill="none" stroke="#ffffff" stroke-width="1"/><rect x="161.5" y="292.5" width="4" height="4" fill="none" stroke="#ffffff" stroke-width="1"/><rect x="163.5" y="291.5" width="4" height="4" fill="none" stroke="#ffffff" stroke-width="1"/><rect x="167.5" y="291.5" width="4" height="4" fill="none" stroke="#ffffff" stroke-width="1"/><rect x="171.5" y="291.5" width="4" height="4" fill="none" stroke="#ffffff" stroke-width="1"/><rect x="174.5" y="291.5" width="4" height="4" fill="none" stroke="#ffffff" stroke-width="1"/><rect x="177.5" y="291.5" width="4" height="4" fill="none" stroke="#ffffff" stroke-width="1"/><rect x="181.5" y="291.5" width="4" height="4" fill="none" stroke="#ffffff" stroke-width="1"/><rect x="183.5" y="291.5" width="4" height="4" fill="none" stroke="#ffffff" stroke-width="1"/><rect x="188.5" y="291.5" width="4" height="4" fill="none" stroke="#ffffff" stroke-width="1"/><rect x="190.5" y="292.5" width="4" height="4" fill="none" stroke="#ffffff" stroke-width="1"/><rect x="194.5" y="291.5" width="4" height="4" fill="none" stroke="#ffffff" stroke-width="1"/><rect x="196.5" y="292.5" width="4" height="4" fill="none" stroke="#ffffff" stroke-width="1"/><rect x="200.5" y="292.5" width="4" height="4" fill="none" stroke="#ffffff" stroke-width="1"/><rect x="204.5" y="291.5" width="4" height="4" fill="none" stroke="#ffffff" stroke-width="1"/><rect x="208.5" y="292.5" width="4" height="4" fill="none" stroke="#ffffff" stroke-width="1"/><rect x="211.5" y="291.5" width="4" height="4" fill="none" stroke="#ffffff" stroke-width="1"/><rect x="214.5" y="292.5" width="4" height="4" fill="none" stroke="#ffffff" stroke-width="1"/><rect x="216.5" y="291.5" width="4" height="4" fill="none" stroke="#ffffff" stroke-width="1"/><rect x="221.5" y="291.5" width="4" height="4" fill="none" stroke="#ffffff" stroke-width="1"/><rect x="224.5" y="291.5" width="4" height="4" fill="none" stroke="#ffffff" stroke-width="1"/><rect x="227.5" y="291.5" width="4" height="4" fill="none" stroke="#ffffff" stroke-width="1"/><rect x="230.5" y="291.5" width="4" height="4" fill="none" stroke="#ffffff" stroke-width="1"/><rect x="235.5" y="291.5" width="4" height="4" fill="none" stroke="#ffffff" stroke-width="1"/><rect x="238.5" y="291.5" width="4" height="4" fill="none" stroke="#ffffff" stroke-width="1"/><rect x="240.5" y="292.5" width="4" height="4" fill="none" stroke="#ffffff" stroke-width="1"/><rect x="244.5" y="291.5" width="4" height="4" fill="none" stroke="#ffffff" stroke-width="1"/><rect x="247.5" y="292.5" width="4" height="4" fill="none" stroke="#ffffff" stroke-width="1"/><rect x="251.5" y="291.5" width="4" height="4" fill="none" stroke="#ffffff" stroke-width="1"/><rect x="253.5" y="291.5" width="4" height="4" fill="none" stroke="#ffffff" stroke-width="1"/><rect x="257.5" y="291.5" width="4" height="4" fill="none" stroke="#ffffff" stroke-width="1"/><rect x="261.5" y="291.5" width="4" height="4" fill="none" stroke="#ffffff" stroke-width="1"/><rect x="264.5" y="291.5" width="4" height="4" fill="none" stroke="#ffffff" stroke-width="1"/><rect x="267.5" y="291.5" width="4" height="4" fill="none" stroke="#ffffff" stroke-width="1"/><rect x="272.5" y="291.5" width="4" height="4" fill="none" stroke="#ffffff" stroke-width="1"/><rect x="275.5" y="292.5" width="4" height="4" fill="none" stroke="#ffffff" stroke-width="1"/><rect x="277.5" y="291.5" width="4" height="4" fill="none" stroke="#ffffff" stroke-width="1"/><rect x="282.5" y="292.5" width="4" height="4" fill="none" stroke="#ffffff" stroke-width="1"/><rect x="285.5" y="291.5" width="4" height="4" fill="none" stroke="#ffffff" stroke-width="1"/><rect x="288.5" y="292.5" width="4" height="4" fill="none" stroke="#ffffff" stroke-width="1"/><rect x="292.5" y="292.5" width="4" height="4" fill="none" stroke="#ffffff" stroke-width="1"/><rect x="294.5" y="291.5" width="4" height="4" fill="none" stroke="#ffffff" stroke-width="1"/><rect x="298.5" y="291.5" width="4" height="4" fill="none" stroke="#ffffff" stroke-width="1"/><rect x="301.5" y="291.5" width="4" height="4" fill="none" stroke="#ffffff" stroke-width="1"/><rect x="304.5" y="291.5" width="4" height="4" fill="none" stroke="#ffffff" stroke-width="1"/><rect x="307.5" y="291.5" width="4" height="4" fill="none" stroke="#ffffff" stroke-width="1"/><rect x="311.5" y="292.5" width="4" height="4" fill="none" stroke="#ffffff" stroke-width="1"/><rect x="315.5" y="292.5" width="4" height="4" fill="none" stroke="#ffffff" stroke-width="1"/><rect x="319.5" y="291.5" width="4" height="4" fill="none" stroke="#ffffff" stroke-width="1"/><rect x="322.5" y="291.5" width="4" height="4" fill="none" stroke="#ffffff" stroke-width="1"/><rect x="324.5" y="291.5" width="4" height="4" fill="none" stroke="#ffffff" stroke-width="1"/><rect x="328.5" y="291.5" width="4" height="4" fill="none" stroke="#ffffff" stroke-width="1"/><rect x="330.5" y="291.5" width="4" height="4" fill="none" stroke="#ffffff" stroke-width="1"/><rect x="335.5" y="291.5" width="4" height="4" fill="none" stroke="#ffffff" stroke-width="1"/><rect x="338.5" y="291.5" width="4" height="4" fill="none" stroke="#ffffff" stroke-width="1"/><rect x="341.5" y="291.5" width="4" height="4" fill="none" stroke="#ffffff" stroke-width="1"/><rect x="344.5" y="291.5" width="4" height="4" fill="none" stroke="#ffffff" stroke-width="1"/><rect x="348.5" y="292.5" width="4" height="4" fill="none" stroke="#ffffff" stroke-width="1"/><rect x="351.5" y="291.5" width="4" height="4" fill="none" stroke="#ffffff" stroke-width="1"/><rect x="356.5" y="292.5" width="4" height="4" fill="none" stroke="#ffffff" stroke-width="1"/><rect x="358.5" y="291.5" width="4" height="4" fill="none" stroke="#ffffff" stroke-width="1"/><rect x="362.5" y="292.5" width="4" height="4" fill="none" stroke="#ffffff" stroke-width="1"/><rect x="365.5" y="291.5" width="4" height="4" fill="none" stroke="#ffffff" stroke-width="1"/><rect x="369.5" y="292.5" width="4" height="4" fill="none" stroke="#ffffff" stroke-width="1"/><rect x="371.5" y="291.5" width="4" height="4" fill="none" stroke="#ffffff" stroke-width="1"/><rect x="375.5" y="292.5" width="4" height="4" fill="none" stroke="#ffffff" stroke-width="1"/><rect x="379.5" y="291.5" width="4" height="4" fill="none" stroke="#ffffff" stroke-width="1"/><rect x="382.5" y="292.5" width="4" height="4" fill="none" stroke="#ffffff" stroke-width="1"/><rect x="385.5" y="291.5" width="4" height="4" fill="none" stroke="#ffffff" stroke-width="1"/><rect x="388.5" y="291.5" width="4" height="4" fill="none" stroke="#ffffff" stroke-width="1"/><rect x="392.5" y="292.5" width="4" height="4" fill="none" stroke="#ffffff" stroke-width="1"/><rect x="394.5" y="291.5" width="4" height="4" fill="none" stroke="#ffffff" stroke-width="1"/><rect x="399.5" y="291.5" width="4" height="4" fill="none" stroke="#ffffff" stroke-width="1"/><rect x="402.5" y="291.5" width="4" height="4" fill="none" stroke="#ffffff" stroke-width="1"/><rect x="405.5" y="291.5" width="4" height="4" fill="none" stroke="#ffffff" stroke-width="1"/><rect x="409.5" y="291.5" width="4" height="4" fill="none" stroke="#ffffff" stroke-width="1"/><rect x="411.5" y="291.5" width="4" height="4" fill="none" stroke="#ffffff" stroke-width="1"/><rect x="415.5" y="291.5" width="4" height="4" fill="none" stroke="#ffffff" stroke-width="1"/><rect x="418.5" y="291.5" width="4" height="4" fill="none" stroke="#ffffff" stroke-width="1"/><rect x="423.5" y="291.5" width="4" height="4" fill="none" stroke="#ffffff" stroke-width="1"/><rect x="426.5" y="291.5" width="4" height="4" fill="none" stroke="#ffffff" stroke-width="1"/><rect x="429.5" y="292.5" width="4" height="4" fill="none" stroke="#ffffff" stroke-width="1"/><rect x="432.5" y="291.5" width="4" height="4" fill="none" stroke="#ffffff" stroke-width="1"/><rect x="436.5" y="291.5" width="4" height="4" fill="none" stroke="#ffffff" stroke-width="1"/><rect x="440.5" y="291.5" width="4" height="4" fill="none" stroke="#ffffff" stroke-width="1"/><rect x="442.5" y="292.5" width="4" height="4" fill="none" stroke="#ffffff" stroke-width="1"/><rect x="446.5" y="291.5" width="4" height="4" fill="none" stroke="#ffffff" stroke-width="1"/><rect x="449.5" y="292.5" width="4" height="4" fill="none" stroke="#ffffff" stroke-width="1"/><rect x="452.5" y="291.5" width="4" height="4" fill="none" stroke="#ffffff" stroke-width="1"/><rect x="455.5" y="291.5" width="4" height="4" fill="none" stroke="#ffffff" stroke-width="1"/><rect x="458.5" y="291.5" width="4" height="4" fill="none" stroke="#ffffff" stroke-width="1"/><rect x="462.5" y="291.5" width="4" height="4" fill="none" stroke="#ffffff" stroke-width="1"/><rect x="466.5" y="292.5" width="4" height="4" fill="none" stroke="#ffffff" stroke-width="1"/><rect x="468.5" y="291.5" width="4" height="4" fill="none" stroke="#ffffff" stroke-width="1"/><rect x="473.5" y="291.5" width="4" height="4" fill="none" stroke="#ffffff" stroke-width="1"/><rect x="475.5" y="291.5" width="4" height="4" fill="none" stroke="#ffffff" stroke-width="1"/><rect x="478.5" y="291.5" width="4" height="4" fill="none" stroke="#ffffff" stroke-width="1"/><rect x="484.5" y="291.5" width="4" height="4" fill="none" stroke="#ffffff" stroke-width="1"/><rect x="486.5" y="291.5" width="4" height="4" fill="none" stroke="#ffffff" stroke-width="1"/><rect x="489.5" y="291.5" width="4" height="4" fill="none" stroke="#ffffff" stroke-width="1"/><rect x="493.5" y="291.5" width="4" height="4" fill="none" stroke="#ffffff" stroke-width="1"/><rect x="496.5" y="291.5" width="4" height="4" fill="none" stroke="#ffffff" stroke-width="1"/><rect x="499.5" y="291.5" width="4" height="4" fill="none" stroke="#ffffff" stroke-width="1"/><rect x="503.5" y="291.5" width="4" height="4" fill="none" stroke="#ffffff" stroke-width="1"/><rect x="506.5" y="291.5" width="4" height="4" fill="none" stroke="#ffffff" stroke-width="1"/><rect x="509.5" y="291.5" width="4" height="4" fill="none" stroke="#ffffff" stroke-width="1"/><rect x="514.5" y="291.5" width="4" height="4" fill="none" stroke="#ffffff" stroke-width="1"/><rect x="517.5" y="291.5" width="4" height="4" fill="none" stroke="#ffffff" stroke-width="1"/><rect x="519.5" y="291.5" width="4" height="4" fill="none" stroke="#ffffff" stroke-width="1"/></g>
<g><path fill="#8b4726" d="M86,291h2v-1h1v1h2v5h-5v-2h-1v-1h1z"/><path fill="#8b4726" d="M90,291h2v-1h1v1h2v5h-5v-2h-1v-1h1z"/><path fill="#8b4726" d="M94,291h2v-1h1v1h2v5h-5v-2h-1v-1h1z"/><path fill="#8b4726" d="M97,291h2v-1h1v1h2v5h-5v-2h-1v-1h1z"/><path fill="#8b4726" d="M100,290h2v-1h1v1h2v5h-5v-2h-1v-1h1z"/><path fill="#8b4726" d="M103,290h2v-1h1v1h2v5h-5v-2h-1v-1h1z"/><path fill="#8b4726" d="M107,290h2v-1h1v1h2v5h-5v-2h-1v-1h1z"/><path fill="#8b4726" d="M110,290h2v-1h1v1h2v5h-5v-2h-1v-1h1z"/><path fill="#8b4726" d="M114,290h2v-1h1v1h2v5h-5v-2h-1v-1h1z"/><path fill="#8b4726" d="M116,290h2v-1h1v1h2v5h-5v-2h-1v-1h1z"/><path fill="#8b4726" d="M120,292h2v-1h1v1h2v5h-5v-2h-1v-1h1z"/><path fill="#8b4726" d="M122,291h2v-1h1v1h2v5h-5v-2h-1v-1h1z"/><path fill="#8b4726" d="M126,291h2v-1h1v1h2v5h-5v-2h-1v-1h1z"/><path fill="#8b4726" d="M130,291h2v-1h1v1h2v5h-5v-2h-1v-1h1z"/><path fill="#8b4726" d="M133,291h2v-1h1v1h2v5h-5v-2h-1v-1h1z"/><path fill="#8b4726" d="M137,291h2v-1h1v1h2v5h-5v-2h-1v-1h1z"/><path fill="#8b4726" d="M140,291h2v-1h1v1h2v5h-5v-2h-1v-1h1z"/><path fill="#8b4726" d="M143,292h2v-1h1v1h2v5h-5v-2h-1v-1h1z"/><path fill="#8b4726" d="M146,291h2v-1h1v1h2v5h-5v-2h-1v-1h1z"/><path fill="#8b4726" d="M150,292h2v-1h1v1h2v5h-5v-2h-1v-1h1z"/><path fill="#8b4726" d="M153,291h2v-1h1v1h2v5h-5v-2h-1v-1h1z"/><path fill="#8b4726" d="M157,292h2v-1h1v1h2v5h-5v-2h-1v-1h1z"/><path fill="#8b4726" d="M159,292h2v-1h1v1h2v5h-5v-2h-1v-1h1z"/><path fill="#8b4726" d="M163,292h2v-1h1v1h2v5h-5v-2h-1v-1h1z"/><path fill="#8b4726" d="M166,292h2v-1h1v1h2v5h-5v-2h-1v-1h1z"/><path fill="#8b4726" d="M169,291h2v-1h1v1h2v5h-5v-2h-1v-1h1z"/><path fill="#8b4726" d="M173,292h2v-1h1v1h2v5h-5v-2h-1v-1h1z"/><path fill="#8b4726" d="M177,292h2v-1h1v1h2v5h-5v-2h-1v-1h1z"/><path fill="#8b4726" d="M180,291h2v-1h1v1h2v5h-5v-2h-1v-1h1z"/><path fill="#8b4726" d="M183,291h2v-1h1v1h2v5h-5v-2h-1v-1h1z"/><path fill="#8b4726" d="M188,291h2v-1h1v1h2v5h-5v-2h-1v-1h1z"/><path fill="#8b4726" d="M189,292h2v-1h1v1h2v5h-5v-2h-1v-1h1z"/><path fill="#8b4726" d="M193,292h2v-1h1v1h2v5h-5v-2h-1v-1h1z"/><path fill="#8b4726" d="M196,291h2v-1h1v1h2v5h-5v-2h-1v-1h1z"/><path fill="#8b4726" d="M200,291h2v-1h1v1h2v5h-5v-2h-1v-1h1z"/><path fill="#8b4726" d="M204,290h2v-1h1v1h2v5h-5v-2h-1v-1h1z"/><path fill="#8b4726" d="M208,290h2v-1h1v1h2v5h-5v-2h-1v-1h1z"/><path fill="#8b4726" d="M210,291h2v-1h1v1h2v5h-5v-2h-1v-1h1z"/><path fill="#8b4726" d="M215,292h2v-1h1v1h2v5h-5v-2h-1v-1h1z"/><path fill="#8b4726" d="M218,291h2v-1h1v1h2v5h-5v-2h-1v-1h1z"/><path fill="#8b4726" d="M221,291h2v-1h1v1h2v5h-5v-2h-1v-1h1z"/><path fill="#8b4726" d="M223,291h2v-1h1v1h2v5h-5v-2h-1v-1h1z"/><path fill="#8b4726" d="M228,292h2v-1h1v1h2v5h-5v-2h-1v-1h1z"/><path fill="#8b4726" d="M230,292h2v-1h1v1h2v5h-5v-2h-1v-1h1z"/><path fill="#8b4726" d="M234,291h2v-1h1v1h2v5h-5v-2h-1v-1h1z"/><path fill="#8b4726" d="M238,292h2v-1h1v1h2v5h-5v-2h-1v-1h1z"/><path fill="#8b4726" d="M241,292h2v-1h1v1h2v5h-5v-2h-1v-1h1z"/><path fill="#8b4726" d="M245,291h2v-1h1v1h2v5h-5v-2h-1v-1h1z"/><path fill="#8b4726" d="M248,291h2v-1h1v1h2v5h-5v-2h-1v-1h1z"/><path fill="#8b4726" d="M251,292h2v-1h1v1h2v5h-5v-2h-1v-1h1z"/><path fill="#8b4726" d="M254,292h2v-1h1v1h2v5h-5v-2h-1v-1h1z"/><path fill="#8b4726" d="M268,292h2v-1h1v1h2v5h-5v-2h-1v-1h1z"/><path fill="#8b4726" d="M270,291h2v-1h1v1h2v5h-5v-2h-1v-1h1z"/><path fill="#8b4726" d="M274,291h2v-1h1v1h2v5h-5v-2h-1v-1h1z"/><path fill="#8b4726" d="M278,291h2v-1h1v1h2v5h-5v-2h-1v-1h1z"/><path fill="#8b4726" d="M281,291h2v-1h1v1h2v5h-5v-2h-1v-1h1z"/><path fill="#8b4726" d="M284,292h2v-1h1v1h2v5h-5v-2h-1v-1h1z"/><path fill="#8b4726" d="M287,291h2v-1h1v1h2v5h-5v-2h-1v-1h1z"/><path fill="#8b4726" d="M292,291h2v-1h1v1h2v5h-5v-2h-1v-1h1z"/><path fill="#8b4726" d="M294,292h2v-1h1v1h2v5h-5v-2h-1v-1h1z"/><path fill="#8b4726" d="M299,291h2v-1h1v1h2v5h-5v-2h-1v-1h1z"/><path fill="#8b4726" d="M301,292h2v-1h1v1h2v5h-5v-2h-1v-1h1z"/><path fill="#8b4726" d="M305,292h2v-1h1v1h2v5h-5v-2h-1v-1h1z"/><path fill="#8b4726" d="M308,291h2v-1h1v1h2v5h-5v-2h-1v-1h1z"/><path fill="#8b4726" d="M312,290h2v-1h1v1h2v5h-5v-2h-1v-1h1z"/><path fill="#8b4726" d="M314,290h2v-1h1v1h2v5h-5v-2h-1v-1h1z"/><path fill="#8b4726" d="M319,290h2v-1h1v1h2v5h-5v-2h-1v-1h1z"/><path fill="#8b4726" d="M322,292h2v-1h1v1h2v5h-5v-2h-1v-1h1z"/><path fill="#8b4726" d="M325,292h2v-1h1v1h2v5h-5v-2h-1v-1h1z"/><path fill="#8b4726" d="M328,291h2v-1h1v1h2v5h-5v-2h-1v-1h1z"/><path fill="#8b4726" d="M331,291h2v-1h1v1h2v5h-5v-2h-1v-1h1z"/><path fill="#8b4726" d="M335,291h2v-1h1v1h2v5h-5v-2h-1v-1h1z"/><path fill="#8b4726" d="M338,291h2v-1h1v1h2v5h-5v-2h-1v-1h1z"/><path fill="#8b4726" d="M341,291h2v-1h1v1h2v5h-5v-2h-1v-1h1z"/><path fill="#8b4726" d="M344,291h2v-1h1v1h2v5h-5v-2h-1v-1h1z"/><path fill="#8b4726" d="M348,292h2v-1h1v1h2v5h-5v-2h-1v-1h1z"/><path fill="#8b4726" d="M352,291h2v-1h1v1h2v5h-5v-2h-1v-1h1z"/><path fill="#8b4726" d="M354,292h2v-1h1v1h2v5h-5v-2h-1v-1h1z"/><path fill="#8b4726" d="M358,291h2v-1h1v1h2v5h-5v-2h-1v-1h1z"/><path fill="#8b4726" d="M362,290h2v-1h1v1h2v5h-5v-2h-1v-1h1z"/><path fill="#8b4726" d="M366,290h2v-1h1v1h2v5h-5v-2h-1v-1h1z"/><path fill="#8b4726" d="M369,290h2v-1h1v1h2v5h-5v-2h-1v-1h1z"/><path fill="#8b4726" d="M373,290h2v-1h1v1h2v5h-5v-2h-1v-1h1z"/><path fill="#8b4726" d="M376,291h2v-1h1v1h2v5h-5v-2h-1v-1h1z"/><path fill="#8b4726" d="M379,292h2v-1h1v1h2v5h-5v-2h-1v-1h1z"/><path fill="#8b4726" d="M381,292h2v-1h1v1h2v5h-5v-2h-1v-1h1z"/><path fill="#8b4726" d="M386,291h2v-1h1v1h2v5h-5v-2h-1v-1h1z"/><path fill="#8b4726" d="M389,292h2v-1h1v1h2v5h-5v-2h-1v-1h1z"/><path fill="#8b4726" d="M392,291h2v-1h1v1h2v5h-5v-2h-1v-1h1z"/><path fill="#8b4726" d="M395,291h2v-1h1v1h2v5h-5v-2h-1v-1h1z"/><path fill="#8b4726" d="M399,292h2v-1h1v1h2v5h-5v-2h-1v-1h1z"/><path fill="#8b4726" d="M401,290h2v-1h1v1h2v5h-5v-2h-1v-1h1z"/><path fill="#8b4726" d="M405,290h2v-1h1v1h2v5h-5v-2h-1v-1h1z"/><path fill="#8b4726" d="M408,292h2v-1h1v1h2v5h-5v-2h-1v-1h1z"/><path fill="#8b4726" d="M413,292h2v-1h1v1h2v5h-5v-2h-1v-1h1z"/><path fill="#8b4726" d="M416,291h2v-1h1v1h2v5h-5v-2h-1v-1h1z"/><path fill="#8b4726" d="M418,292h2v-1h1v1h2v5h-5v-2h-1v-1h1z"/><path fill="#8b4726" d="M422,291h2v-1h1v1h2v5h-5v-2h-1v-1h1z"/><path fill="#8b4726" d="M426,292h2v-1h1v1h2v5h-5v-2h-1v-1h1z"/><path fill="#8b4726" d="M429,290h2v-1h1v1h2v5h-5v-2h-1v-1h1z"/><path fill="#8b4726" d="M432,290h2v-1h1v1h2v5h-5v-2h-1v-1h1z"/><path fill="#8b4726" d="M435,290h2v-1h1v1h2v5h-5v-2h-1v-1h1z"/><path fill="#8b4726" d="M439,290h2v-1h1v1h2v5h-5v-2h-1v-1h1z"/><path fill="#8b4726" d="M442,290h2v-1h1v1h2v5h-5v-2h-1v-1h1z"/><path fill="#8b4726" d="M447,291h2v-1h1v1h2v5h-5v-2h-1v-1h1z"/><path fill="#8b4726" d="M449,291h2v-1h1v1h2v5h-5v-2h-1v-1h1z"/><path fill="#8b4726" d="M452,291h2v-1h1v1h2v5h-5v-2h-1v-1h1z"/><path fill="#8b4726" d="M456,291h2v-1h1v1h2v5h-5v-2h-1v-1h1z"/><path fill="#8b4726" d="M459,292h2v-1h1v1h2v5h-5v-2h-1v-1h1z"/><path fill="#8b4726" d="M463,291h2v-1h1v1h2v5h-5v-2h-1v-1h1z"/><path fill="#8b4726" d="M465,292h2v-1h1v1h2v5h-5v-2h-1v-1h1z"/><path fill="#8b4726" d="M469,292h2v-1h1v1h2v5h-5v-2h-1v-1h1z"/><path fill="#8b4726" d="M473,290h2v-1h1v1h2v5h-5v-2h-1v-1h1z"/><path fill="#8b4726" d="M475,290h2v-1h1v1h2v5h-5v-2h-1v-1h1z"/><path fill="#8b4726" d="M479,292h2v-1h1v1h2v5h-5v-2h-1v-1h1z"/><path fill="#8b4726" d="M482,291h2v-1h1v1h2v5h-5v-2h-1v-1h1z"/><path fill="#8b4726" d="M486,292h2v-1h1v1h2v5h-5v-2h-1v-1h1z"/><path fill="#8b4726" d="M489,292h2v-1h1v1h2v5h-5v-2h-1v-1h1z"/><path fill="#8b4726" d="M492,291h2v-1h1v1h2v5h-5v-2h-1v-1h1z"/><path fill="#8b4726" d="M497,290h2v-1h1v1h2v5h-5v-2h-1v-1h1z"/><path fill="#8b4726" d="M500,290h2v-1h1v1h2v5h-5v-2h-1v-1h1z"/><path fill="#8b4726" d="M502,290h2v-1h1v1h2v5h-5v-2h-1v-1h1z"/><path fill="#8b4726" d="M506,290h2v-1h1v1h2v5h-5v-2h-1v-1h1z"/><path fill="#8b4726" d="M509,292h2v-1h1v1h2v5h-5v-2h-1v-1h1z"/><path fill="#8b4726" d="M513,292h2v-1h1v1h2v5h-5v-2h-1v-1h1z"/><path fill="#8b4726" d="M516,291h2v-1h1v1h2v5h-5v-2h-1v-1h1z"/><path fill="#8b4726" d="M519,291h2v-1h1v1h2v5h-5v-2h-1v-1h1z"/><path fill="#8b4726" d="M225,270h2v-1h1v1h2v5h-5v-2h-1v-1h1z"/><path fill="#8b4726" d="M428,251h2v-1h1v1h2v5h-5v-2h-1v-1h1z"/><path fill="#8b4726" d="M487,220h2v-1h1v1h2v5h-5v-2h-1v-1h1z"/></g>
<g><rect x="86" y="274" width="5" height="5" fill="#b4b4b4"/><rect x="88" y="274" width="5" height="5" fill="#b4b4b4"/><rect x="89" y="275" width="5" height="5" fill="#b4b4b4"/><rect x="91" y="275" width="5" height="5" fill="#b4b4b4"/><rect x="93" y="274" width="5" height="5" fill="#b4b4b4"/><rect x="95" y="275" width="5" height="5" fill="#b4b4b4"/><rect x="96" y="274" width="5" height="5" fill="#b4b4b4"/><rect x="98" y="275" width="5" height="5" fill="#b4b4b4"/><rect x="100" y="274" width="5" height="5" fill="#b4b4b4"/><rect x="101" y="274" width="5" height="5" fill="#b4b4b4"/><rect x="103" y="274" width="5" height="5" fill="#b4b4b4"/><rect x="105" y="275" width="5" height="5" fill="#b4b4b4"/><rect x="106" y="276" width="5" height="5" fill="#b4b4b4"/><rect x="108" y="274" width="5" height="5" fill="#b4b4b4"/><rect x="110" y="274" width="5" height="5" fill="#b4b4b4"/><rect x="111" y="276" width="5" height="5" fill="#b4b4b4"/><rect x="113" y="275" width="5" height="5" fill="#b4b4b4"/><rect x="115" y="274" width="5" height="5" fill="#b4b4b4"/><rect x="116" y="275" width="5" height="5" fill="#b4b4b4"/><rect x="118" y="275" width="5" height="5" fill="#b4b4b4"/><rect x="120" y="275" width="5" height="5" fill="#b4b4b4"/><rect x="121" y="275" width="5" height="5" fill="#b4b4b4"/><rect x="123" y="274" width="5" height="5" fill="#b4b4b4"/><rect x="125" y="275" width="5" height="5" fill="#b4b4b4"/><rect x="126" y="274" width="5" height="5" fill="#b4b4b4"/><rect x="128" y="274" width="5" height="5" fill="#b4b4b4"/><rect x="130" y="275" width="5" height="5" fill="#b4b4b4"/><rect x="131" y="274" width="5" height="5" fill="#b4b4b4"/><rect x="133" y="275" width="5" height="5" fill="#b4b4b4"/><rect x="135" y="274" width="5" height="5" fill="#b4b4b4"/><rect x="137" y="275" width="5" height="5" fill="#b4b4b4"/><rect x="138" y="275" width="5" height="5" fill="#b4b4b4"/><rect x="140" y="274" width="5" height="5" fill="#b4b4b4"/><rect x="142" y="274" width="5" height="5" fill="#b4b4b4"/><rect x="143" y="276" width="5" height="5" fill="#b4b4b4"/><rect x="145" y="275" width="5" height="5" fill="#b4b4b4"/><rect x="147" y="274" width="5" height="5" fill="#b4b4b4"/><rect x="148" y="274" width="5" height="5" fill="#b4b4b4"/><rect x="150" y="274" width="5" height="5" fill="#b4b4b4"/><rect x="152" y="275" width="5" height="5" fill="#b4b4b4"/><rect x="153" y="275" width="5" height="5" fill="#b4b4b4"/><rect x="155" y="274" width="5" height="5" fill="#b4b4b4"/><rect x="157" y="274" width="5" height="5" fill="#b4b4b4"/><rect x="158" y="275" width="5" height="5" fill="#b4b4b4"/><rect x="160" y="275" width="5" height="5" fill="#b4b4b4"/><rect x="162" y="276" width="5" height="5" fill="#b4b4b4"/><rect x="163" y="274" width="5" height="5" fill="#b4b4b4"/><rect x="165" y="275" width="5" height="5" fill="#b4b4b4"/><rect x="167" y="275" width="5" height="5" fill="#b4b4b4"/><rect x="168" y="274" width="5" height="5" fill="#b4b4b4"/><rect x="170" y="275" width="5" height="5" fill="#b4b4b4"/><rect x="172" y="276" width="5" height="5" fill="#b4b4b4"/><rect x="173" y="274" width="5" height="5" fill="#b4b4b4"/><rect x="175" y="274" width="5" height="5" fill="#b4b4b4"/><rect x="177" y="274" width="5" height="5" fill="#b4b4b4"/><rect x="179" y="275" width="5" height="5" fill="#b4b4b4"/><rect x="180" y="274" width="5" height="5" fill="#b4b4b4"/><rect x="182" y="275" width="5" height="5" fill="#b4b4b4"/><rect x="184" y="275" width="5" height="5" fill="#b4b4b4"/><rect x="185" y="275" width="5" height="5" fill="#b4b4b4"/><rect x="187" y="274" width="5" height="5" fill="#b4b4b4"/><rect x="189" y="276" width="5" height="5" fill="#b4b4b4"/><rect x="190" y="276" width="5" height="5" fill="#b4b4b4"/><rect x="192" y="274" width="5" height="5" fill="#b4b4b4"/><rect x="194" y="275" width="5" height="5" fill="#b4b4b4"/><rect x="195" y="275" width="5" height="5" fill="#b4b4b4"/><rect x="197" y="274" width="5" height="5" fill="#b4b4b4"/><rect x="200" y="272" width="5" height="5" fill="#b4b4b4"/><rect x="204" y="273" width="5" height="5" fill="#b4b4b4"/><rect x="207" y="276" width="5" height="5" fill="#b4b4b4"/><rect x="209" y="274" width="5" height="5" fill="#b4b4b4"/><rect x="210" y="275" width="5" height="5" fill="#b4b4b4"/><rect x="212" y="276" width="5" height="5" fill="#b4b4b4"/><rect x="214" y="275" width="5" height="5" fill="#b4b4b4"/><rect x="215" y="275" width="5" height="5" fill="#b4b4b4"/><rect x="217" y="275" width="5" height="5" fill="#b4b4b4"/><rect x="219" y="274" width="5" height="5" fill="#b4b4b4"/><rect x="221" y="274" width="5" height="5" fill="#b4b4b4"/><rect x="222" y="275" width="5" height="5" fill="#b4b4b4"/><rect x="224" y="276" width="5" height="5" fill="#b4b4b4"/><rect x="226" y="274" width="5" height="5" fill="#b4b4b4"/><rect x="227" y="274" width="5" height="5" fill="#b4b4b4"/><rect x="229" y="276" width="5" height="5" fill="#b4b4b4"/><rect x="231" y="276" width="5" height="5" fill="#b4b4b4"/><rect x="232" y="275" width="5" height="5" fill="#b4b4b4"/><rect x="234" y="274" width="5" height="5" fill="#b4b4b4"/><rect x="236" y="276" width="5" height="5" fill="#b4b4b4"/><rect x="237" y="274" width="5" height="5" fill="#b4b4b4"/><rect x="251" y="275" width="5" height="5" fill="#b4b4b4"/><rect x="252" y="275" width="5" height="5" fill="#b4b4b4"/><rect x="254" y="275" width="5" height="5" fill="#b4b4b4"/><rect x="256" y="274" width="5" height="5" fill="#b4b4b4"/><rect x="257" y="274" width="5" height="5" fill="#b4b4b4"/><rect x="259" y="275" width="5" height="5" fill="#b4b4b4"/><rect x="261" y="275" width="5" height="5" fill="#b4b4b4"/><rect x="263" y="275" width="5" height="5" fill="#b4b4b4"/><rect x="264" y="275" width="5" height="5" fill="#b4b4b4"/><rect x="266" y="275" width="5" height="5" fill="#b4b4b4"/><rect x="268" y="275" width="5" height="5" fill="#b4b4b4"/><rect x="269" y="275" width="5" height="5" fill="#b4b4b4"/><rect x="271" y="275" width="5" height="5" fill="#b4b4b4"/><rect x="273" y="275" width="5" height="5" fill="#b4b4b4"/><rect x="274" y="275" width="5" height="5" fill="#b4b4b4"/><rect x="276" y="275" width="5" height="5" fill="#b4b4b4"/><rect x="278" y="274" width="5" height="5" fill="#b4b4b4"/><rect x="279" y="274" width="5" height="5" fill="#b4b4b4"/><rect x="281" y="274" width="5" height="5" fill="#b4b4b4"/><rect x="283" y="275" width="5" height="5" fill="#b4b4b4"/><rect x="284" y="275" width="5" height="5" fill="#b4b4b4"/><rect x="286" y="275" width="5" height="5" fill="#b4b4b4"/><rect x="288" y="275" width="5" height="5" fill="#b4b4b4"/><rect x="289" y="274" width="5" height="5" fill="#b4b4b4"/><rect x="291" y="275" width="5" height="5" fill="#b4b4b4"/><rect x="293" y="274" width="5" height="5" fill="#b4b4b4"/><rect x="294" y="274" width="5" height="5" fill="#b4b4b4"/><rect x="296" y="275" width="5" height="5" fill="#b4b4b4"/><rect x="298" y="274" width="5" height="5" fill="#b4b4b4"/><rect x="299" y="276" width="5" height="5" fill="#b4b4b4"/><rect x="301" y="275" width="5" height="5" fill="#b4b4b4"/><rect x="303" y="274" width="5" height="5" fill="#b4b4b4"/><rect x="305" y="275" width="5" height="5" fill="#b4b4b4"/><rect x="306" y="276" width="5" height="5" fill="#b4b4b4"/><rect x="308" y="274" width="5" height="5" fill="#b4b4b4"/><rect x="310" y="275" width="5" height="5" fill="#b4b4b4"/><rect x="311" y="275" width="5" height="5" fill="#b4b4b4"/><rect x="313" y="276" width="5" height="5" fill="#b4b4b4"/><rect x="315" y="274" width="5" height="5" fill="#b4b4b4"/><rect x="316" y="275" width="5" height="5" fill="#b4b4b4"/><rect x="318" y="276" width="5" height="5" fill="#b4b4b4"/><rect x="320" y="275" width="5" height="5" fill="#b4b4b4"/><rect x="321" y="274" width="5" height="5" fill="#b4b4b4"/><rect x="323" y="274" width="5" height="5" fill="#b4b4b4"/><rect x="325" y="275" width="5" height="5" fill="#b4b4b4"/><rect x="326" y="275" width="5" height="5" fill="#b4b4b4"/><rect x="328" y="274" width="5" height="5" fill="#b4b4b4"/><rect x="330" y="276" width="5" height="5" fill="#b4b4b4"/><rect x="331" y="275" width="5" height="5" fill="#b4b4b4"/><rect x="333" y="275" width="5" height="5" fill="#b4b4b4"/><rect x="335" y="276" width="5" height="5" fill="#b4b4b4"/><rect x="336" y="275" width="5" height="5" fill="#b4b4b4"/><rect x="338" y="274" width="5" height="5" fill="#b4b4b4"/><rect x="340" y="275" width="5" height="5" fill="#b4b4b4"/><rect x="341" y="274" width="5" height="5" fill="#b4b4b4"/><rect x="343" y="274" width="5" height="5" fill="#b4b4b4"/><rect x="345" y="276" width="5" height="5" fill="#b4b4b4"/><rect x="347" y="275" width="5" height="5" fill="#b4b4b4"/><rect x="348" y="273" width="5" height="5" fill="#b4b4b4"/><rect x="352" y="273" width="5" height="5" fill="#b4b4b4"/><rect x="355" y="274" width="5" height="5" fill="#b4b4b4"/><rect x="358" y="274" width="5" height="5" fill="#b4b4b4"/><rect x="362" y="274" width="5" height="5" fill="#b4b4b4"/><rect x="363" y="274" width="5" height="5" fill="#b4b4b4"/><rect x="365" y="275" width="5" height="5" fill="#b4b4b4"/><rect x="367" y="275" width="5" height="5" fill="#b4b4b4"/><rect x="368" y="275" width="5" height="5" fill="#b4b4b4"/><rect x="370" y="276" width="5" height="5" fill="#b4b4b4"/><rect x="372" y="275" width="5" height="5" fill="#b4b4b4"/><rect x="373" y="276" width="5" height="5" fill="#b4b4b4"/><rect x="375" y="275" width="5" height="5" fill="#b4b4b4"/><rect x="377" y="275" width="5" height="5" fill="#b4b4b4"/><rect x="378" y="274" width="5" height="5" fill="#b4b4b4"/><rect x="380" y="275" width="5" height="5" fill="#b4b4b4"/><rect x="382" y="274" width="5" height="5" fill="#b4b4b4"/><rect x="383" y="276" width="5" height="5" fill="#b4b4b4"/><rect x="385" y="275" width="5" height="5" fill="#b4b4b4"/><rect x="387" y="275" width="5" height="5" fill="#b4b4b4"/><rect x="389" y="274" width="5" height="5" fill="#b4b4b4"/><rect x="390" y="274" width="5" height="5" fill="#b4b4b4"/><rect x="392" y="275" width="5" height="5" fill="#b4b4b4"/><rect x="394" y="275" width="5" height="5" fill="#b4b4b4"/><rect x="395" y="274" width="5" height="5" fill="#b4b4b4"/><rect x="397" y="276" width="5" height="5" fill="#b4b4b4"/><rect x="399" y="275" width="5" height="5" fill="#b4b4b4"/><rect x="400" y="276" width="5" height="5" fill="#b4b4b4"/><rect x="402" y="274" width="5" height="5" fill="#b4b4b4"/><rect x="404" y="275" width="5" height="5" fill="#b4b4b4"/><rect x="405" y="274" width="5" height="5" fill="#b4b4b4"/><rect x="407" y="275" width="5" height="5" fill="#b4b4b4"/><rect x="409" y="275" width="5" height="5" fill="#b4b4b4"/><rect x="410" y="275" width="5" height="5" fill="#b4b4b4"/><rect x="412" y="274" width="5" height="5" fill="#b4b4b4"/><rect x="414" y="274" width="5" height="5" fill="#b4b4b4"/><rect x="415" y="275" width="5" height="5" fill="#b4b4b4"/><rect x="417" y="275" width="5" height="5" fill="#b4b4b4"/><rect x="419" y="275" width="5" height="5" fill="#b4b4b4"/><rect x="420" y="274" width="5" height="5" fill="#b4b4b4"/><rect x="422" y="275" width="5" height="5" fill="#b4b4b4"/><rect x="424" y="275" width="5" height="5" fill="#b4b4b4"/><rect x="425" y="274" width="5" height="5" fill="#b4b4b4"/><rect x="427" y="276" width="5" height="5" fill="#b4b4b4"/><rect x="429" y="274" width="5" height="5" fill="#b4b4b4"/><rect x="431" y="274" width="5" height="5" fill="#b4b4b4"/><rect x="432" y="274" width="5" height="5" fill="#b4b4b4"/><rect x="436" y="273" width="5" height="5" fill="#b4b4b4"/><rect x="439" y="275" width="5" height="5" fill="#b4b4b4"/><rect x="441" y="276" width="5" height="5" fill="#b4b4b4"/><rect x="442" y="275" width="5" height="5" fill="#b4b4b4"/><rect x="444" y="275" width="5" height="5" fill="#b4b4b4"/><rect x="446" y="275" width="5" height="5" fill="#b4b4b4"/><rect x="447" y="275" width="5" height="5" fill="#b4b4b4"/><rect x="449" y="275" width="5" height="5" fill="#b4b4b4"/><rect x="451" y="274" width="5" height="5" fill="#b4b4b4"/><rect x="452" y="275" width="5" height="5" fill="#b4b4b4"/><rect x="454" y="276" width="5" height="5" fill="#b4b4b4"/><rect x="456" y="275" width="5" height="5" fill="#b4b4b4"/><rect x="457" y="274" width="5" height="5" fill="#b4b4b4"/><rect x="459" y="274" width="5" height="5" fill="#b4b4b4"/><rect x="461" y="274" width="5" height="5" fill="#b4b4b4"/><rect x="462" y="274" width="5" height="5" fill="#b4b4b4"/><rect x="464" y="275" width="5" height="5" fill="#b4b4b4"/><rect x="466" y="274" width="5" height="5" fill="#b4b4b4"/><rect x="469" y="274" width="5" height="5" fill="#b4b4b4"/><rect x="473" y="275" width="5" height="5" fill="#b4b4b4"/><rect x="474" y="274" width="5" height="5" fill="#b4b4b4"/><rect x="476" y="273" width="5" height="5" fill="#b4b4b4"/><rect x="479" y="274" width="5" height="5" fill="#b4b4b4"/><rect x="483" y="274" width="5" height="5" fill="#b4b4b4"/><rect x="484" y="275" width="5" height="5" fill="#b4b4b4"/><rect x="486" y="274" width="5" height="5" fill="#b4b4b4"/><rect x="488" y="275" width="5" height="5" fill="#b4b4b4"/><rect x="489" y="274" width="5" height="5" fill="#b4b4b4"/><rect x="491" y="275" width="5" height="5" fill="#b4b4b4"/><rect x="493" y="275" width="5" height="5" fill="#b4b4b4"/><rect x="494" y="276" width="5" height="5" fill="#b4b4b4"/><rect x="496" y="275" width="5" height="5" fill="#b4b4b4"/><rect x="498" y="275" width="5" height="5" fill="#b4b4b4"/><rect x="499" y="275" width="5" height="5" fill="#b4b4b4"/><rect x="501" y="275" width="5" height="5" fill="#b4b4b4"/><rect x="503" y="275" width="5" height="5" fill="#b4b4b4"/><rect x="504" y="274" width="5" height="5" fill="#b4b4b4"/><rect x="506" y="275" width="5" height="5" fill="#b4b4b4"/><rect x="508" y="275" width="5" height="5" fill="#b4b4b4"/><rect x="509" y="274" width="5" height="5" fill="#b4b4b4"/><rect x="511" y="274" width="5" height="5" fill="#b4b4b4"/><rect x="513" y="276" width="5" height="5" fill="#b4b4b4"/><rect x="515" y="274" width="5" height="5" fill="#b4b4b4"/><rect x="516" y="274" width="5" height="5" fill="#b4b4b4"/><rect x="518" y="275" width="5" height="5" fill="#b4b4b4"/><rect x="520" y="276" width="5" height="5" fill="#b4b4b4"/><rect x="242" y="269" width="5" height="5" fill="#b4b4b4"/><rect x="245" y="272" width="5" height="5" fill="#b4b4b4"/><rect x="249" y="276" width="5" height="5" fill="#b4b4b4"/><rect x="105" y="245" width="5" height="5" fill="#b4b4b4"/><rect x="256" y="224" width="5" height="5" fill="#b4b4b4"/><rect x="190" y="266" width="5" height="5" fill="#b4b4b4"/><rect x="306" y="265" width="5" height="5" fill="#b4b4b4"/><rect x="348" y="267" width="5" height="5" fill="#b4b4b4"/></g>
<g><path fill="#a020f0" d="M100,208h1v2h1v2h1v1h-5v-2h1v-2h1z"/><path fill="#a020f0" d="M94,214h1v2h1v2h1v1h-5v-2h1v-2h1z"/><path fill="#a020f0" d="M92,221h1v2h1v2h1v1h-5v-2h1v-2h1z"/><path fill="#a020f0" d="M106,214h1v2h1v2h1v1h-5v-2h1v-2h1z"/><path fill="#a020f0" d="M121,214h1v2h1v2h1v1h-5v-2h1v-2h1z"/><path fill="#a020f0" d="M137,207h1v2h1v2h1v1h-5v-2h1v-2h1z"/><path fill="#a020f0" d="M116,225h1v2h1v2h1v1h-5v-2h1v-2h1z"/><path fill="#a020f0" d="M119,228h1v2h1v2h1v1h-5v-2h1v-2h1z"/><path fill="#a020f0" d="M110,235h1v2h1v2h1v1h-5v-2h1v-2h1z"/><path fill="#a020f0" d="M126,228h1v2h1v2h1v1h-5v-2h1v-2h1z"/><path fill="#a020f0" d="M134,232h1v2h1v2h1v1h-5v-2h1v-2h1z"/><path fill="#a020f0" d="M139,234h1v2h1v2h1v1h-5v-2h1v-2h1z"/><path fill="#a020f0" d="M143,233h1v2h1v2h1v1h-5v-2h1v-2h1z"/><path fill="#a020f0" d="M131,242h1v2h1v2h1v1h-5v-2h1v-2h1z"/><path fill="#a020f0" d="M152,217h1v2h1v2h1v1h-5v-2h1v-2h1z"/><path fill="#a020f0" d="M158,220h1v2h1v2h1v1h-5v-2h1v-2h1z"/><path fill="#a020f0" d="M150,231h1v2h1v2h1v1h-5v-2h1v-2h1z"/><path fill="#a020f0" d="M155,231h1v2h1v2h1v1h-5v-2h1v-2h1z"/><path fill="#a020f0" d="M160,230h1v2h1v2h1v1h-5v-2h1v-2h1z"/><path fill="#a020f0" d="M168,216h1v2h1v2h1v1h-5v-2h1v-2h1z"/><path fill="#a020f0" d="M166,226h1v2h1v2h1v1h-5v-2h1v-2h1z"/><path fill="#a020f0" d="M171,228h1v2h1v2h1v1h-5v-2h1v-2h1z"/><path fill="#a020f0" d="M174,219h1v2h1v2h1v1h-5v-2h1v-2h1z"/><path fill="#a020f0" d="M179,219h1v2h1v2h1v1h-5v-2h1v-2h1z"/><path fill="#a020f0" d="M176,233h1v2h1v2h1v1h-5v-2h1v-2h1z"/><path fill="#a020f0" d="M181,225h1v2h1v2h1v1h-5v-2h1v-2h1z"/><path fill="#a020f0" d="M184,215h1v2h1v2h1v1h-5v-2h1v-2h1z"/><path fill="#a020f0" d="M187,211h1v2h1v2h1v1h-5v-2h1v-2h1z"/><path fill="#a020f0" d="M189,214h1v2h1v2h1v1h-5v-2h1v-2h1z"/><path fill="#a020f0" d="M192,211h1v2h1v2h1v1h-5v-2h1v-2h1z"/><path fill="#a020f0" d="M203,212h1v2h1v2h1v1h-5v-2h1v-2h1z"/><path fill="#a020f0" d="M195,218h1v2h1v2h1v1h-5v-2h1v-2h1z"/><path fill="#a020f0" d="M208,219h1v2h1v2h1v1h-5v-2h1v-2h1z"/><path fill="#a020f0" d="M218,220h1v2h1v2h1v1h-5v-2h1v-2h1z"/><path fill="#a020f0" d="M226,209h1v2h1v2h1v1h-5v-2h1v-2h1z"/><path fill="#a020f0" d="M232,208h1v2h1v2h1v1h-5v-2h1v-2h1z"/><path fill="#a020f0" d="M240,224h1v2h1v2h1v1h-5v-2h1v-2h1z"/><path fill="#a020f0" d="M234,234h1v2h1v2h1v1h-5v-2h1v-2h1z"/><path fill="#a020f0" d="M245,235h1v2h1v2h1v1h-5v-2h1v-2h1z"/><path fill="#a020f0" d="M250,233h1v2h1v2h1v1h-5v-2h1v-2h1z"/><path fill="#a020f0" d="M242,249h1v2h1v2h1v1h-5v-2h1v-2h1z"/><path fill="#a020f0" d="M256,211h1v2h1v2h1v1h-5v-2h1v-2h1z"/><path fill="#a020f0" d="M266,205h1v2h1v2h1v1h-5v-2h1v-2h1z"/><path fill="#a020f0" d="M261,220h1v2h1v2h1v1h-5v-2h1v-2h1z"/><path fill="#a020f0" d="M252,225h1v2h1v2h1v1h-5v-2h1v-2h1z"/><path fill="#a020f0" d="M248,218h1v2h1v2h1v1h-5v-2h1v-2h1z"/><path fill="#a020f0" d="M263,239h1v2h1v2h1v1h-5v-2h1v-2h1z"/><path fill="#a020f0" d="M277,216h1v2h1v2h1v1h-5v-2h1v-2h1z"/><path fill="#a020f0" d="M274,235h1v2h1v2h1v1h-5v-2h1v-2h1z"/><path fill="#a020f0" d="M279,234h1v2h1v2h1v1h-5v-2h1v-2h1z"/><path fill="#a020f0" d="M282,242h1v2h1v2h1v1h-5v-2h1v-2h1z"/><path fill="#a020f0" d="M285,218h1v2h1v2h1v1h-5v-2h1v-2h1z"/><path fill="#a020f0" d="M289,219h1v2h1v2h1v1h-5v-2h1v-2h1z"/><path fill="#a020f0" d="M294,214h1v2h1v2h1v1h-5v-2h1v-2h1z"/><path fill="#a020f0" d="M298,223h1v2h1v2h1v1h-5v-2h1v-2h1z"/><path fill="#a020f0" d="M301,222h1v2h1v2h1v1h-5v-2h1v-2h1z"/><path fill="#a020f0" d="M303,211h1v2h1v2h1v1h-5v-2h1v-2h1z"/><path fill="#a020f0" d="M317,212h1v2h1v2h1v1h-5v-2h1v-2h1z"/><path fill="#a020f0" d="M319,219h1v2h1v2h1v1h-5v-2h1v-2h1z"/><path fill="#a020f0" d="M309,222h1v2h1v2h1v1h-5v-2h1v-2h1z"/><path fill="#a020f0" d="M314,230h1v2h1v2h1v1h-5v-2h1v-2h1z"/><path fill="#a020f0" d="M311,232h1v2h1v2h1v1h-5v-2h1v-2h1z"/><path fill="#a020f0" d="M332,226h1v2h1v2h1v1h-5v-2h1v-2h1z"/><path fill="#a020f0" d="M335,219h1v2h1v2h1v1h-5v-2h1v-2h1z"/><path fill="#a020f0" d="M338,223h1v2h1v2h1v1h-5v-2h1v-2h1z"/><path fill="#a020f0" d="M340,217h1v2h1v2h1v1h-5v-2h1v-2h1z"/><path fill="#a020f0" d="M330,235h1v2h1v2h1v1h-5v-2h1v-2h1z"/><path fill="#a020f0" d="M324,242h1v2h1v2h1v1h-5v-2h1v-2h1z"/><path fill="#a020f0" d="M343,229h1v2h1v2h1v1h-5v-2h1v-2h1z"/><path fill="#a020f0" d="M351,220h1v2h1v2h1v1h-5v-2h1v-2h1z"/><path fill="#a020f0" d="M353,222h1v2h1v2h1v1h-5v-2h1v-2h1z"/><path fill="#a020f0" d="M359,229h1v2h1v2h1v1h-5v-2h1v-2h1z"/><path fill="#a020f0" d="M362,212h1v2h1v2h1v1h-5v-2h1v-2h1z"/><path fill="#a020f0" d="M364,227h1v2h1v2h1v1h-5v-2h1v-2h1z"/><path fill="#a020f0" d="M369,243h1v2h1v2h1v1h-5v-2h1v-2h1z"/><path fill="#a020f0" d="M376,229h1v2h1v2h1v1h-5v-2h1v-2h1z"/><path fill="#a020f0" d="M380,221h1v2h1v2h1v1h-5v-2h1v-2h1z"/><path fill="#a020f0" d="M384,218h1v2h1v2h1v1h-5v-2h1v-2h1z"/><path fill="#a020f0" d="M386,216h1v2h1v2h1v1h-5v-2h1v-2h1z"/><path fill="#a020f0" d="M391,215h1v2h1v2h1v1h-5v-2h1v-2h1z"/><path fill="#a020f0" d="M393,234h1v2h1v2h1v1h-5v-2h1v-2h1z"/><path fill="#a020f0" d="M396,227h1v2h1v2h1v1h-5v-2h1v-2h1z"/><path fill="#a020f0" d="M401,213h1v2h1v2h1v1h-5v-2h1v-2h1z"/><path fill="#a020f0" d="M404,228h1v2h1v2h1v1h-5v-2h1v-2h1z"/><path fill="#a020f0" d="M405,213h1v2h1v2h1v1h-5v-2h1v-2h1z"/><path fill="#a020f0" d="M409,222h1v2h1v2h1v1h-5v-2h1v-2h1z"/><path fill="#a020f0" d="M412,225h1v2h1v2h1v1h-5v-2h1v-2h1z"/><path fill="#a020f0" d="M420,216h1v2h1v2h1v1h-5v-2h1v-2h1z"/><path fill="#a020f0" d="M425,215h1v2h1v2h1v1h-5v-2h1v-2h1z"/><path fill="#a020f0" d="M433,215h1v2h1v2h1v1h-5v-2h1v-2h1z"/><path fill="#a020f0" d="M430,220h1v2h1v2h1v1h-5v-2h1v-2h1z"/><path fill="#a020f0" d="M438,218h1v2h1v2h1v1h-5v-2h1v-2h1z"/><path fill="#a020f0" d="M446,214h1v2h1v2h1v1h-5v-2h1v-2h1z"/><path fill="#a020f0" d="M416,232h1v2h1v2h1v1h-5v-2h1v-2h1z"/><path fill="#a020f0" d="M441,230h1v2h1v2h1v1h-5v-2h1v-2h1z"/><path fill="#a020f0" d="M435,242h1v2h1v2h1v1h-5v-2h1v-2h1z"/><path fill="#a020f0" d="M453,219h1v2h1v2h1v1h-5v-2h1v-2h1z"/><path fill="#a020f0" d="M462,216h1v2h1v2h1v1h-5v-2h1v-2h1z"/><path fill="#a020f0" d="M467,217h1v2h1v2h1v1h-5v-2h1v-2h1z"/><path fill="#a020f0" d="M464,233h1v2h1v2h1v1h-5v-2h1v-2h1z"/><path fill="#a020f0" d="M459,239h1v2h1v2h1v1h-5v-2h1v-2h1z"/><path fill="#a020f0" d="M470,223h1v2h1v2h1v1h-5v-2h1v-2h1z"/><path fill="#a020f0" d="M478,208h1v2h1v2h1v1h-5v-2h1v-2h1z"/><path fill="#a020f0" d="M480,222h1v2h1v2h1v1h-5v-2h1v-2h1z"/><path fill="#a020f0" d="M485,221h1v2h1v2h1v1h-5v-2h1v-2h1z"/><path fill="#a020f0" d="M488,222h1v2h1v2h1v1h-5v-2h1v-2h1z"/><path fill="#a020f0" d="M491,216h1v2h1v2h1v1h-5v-2h1v-2h1z"/><path fill="#a020f0" d="M494,218h1v2h1v2h1v1h-5v-2h1v-2h1z"/><path fill="#a020f0" d="M499,217h1v2h1v2h1v1h-5v-2h1v-2h1z"/><path fill="#a020f0" d="M502,222h1v2h1v2h1v1h-5v-2h1v-2h1z"/><path fill="#a020f0" d="M496,226h1v2h1v2h1v1h-5v-2h1v-2h1z"/><path fill="#a020f0" d="M504,233h1v2h1v2h1v1h-5v-2h1v-2h1z"/><path fill="#a020f0" d="M509,217h1v2h1v2h1v1h-5v-2h1v-2h1z"/><path fill="#a020f0" d="M512,213h1v2h1v2h1v1h-5v-2h1v-2h1z"/><path fill="#a020f0" d="M517,215h1v2h1v2h1v1h-5v-2h1v-2h1z"/><path fill="#a020f0" d="M523,222h1v2h1v2h1v1h-5v-2h1v-2h1z"/><path fill="#a020f0" d="M520,236h1v2h1v2h1v1h-5v-2h1v-2h1z"/></g>
<g><polygon fill="#ffa500" points="89.5,235.0 93.0,238.5 89.5,242.0 86.0,238.5"/><polygon fill="#ffa500" points="97.5,226.0 101.0,229.5 97.5,233.0 94.0,229.5"/><polygon fill="#ffa500" points="102.5,212.0 106.0,215.5 102.5,219.0 99.0,215.5"/><polygon fill="#ffa500" points="108.5,215.0 112.0,218.5 108.5,222.0 105.0,218.5"/><polygon fill="#ffa500" points="113.5,215.0 117.0,218.5 113.5,222.0 110.0,218.5"/><polygon fill="#ffa500" points="121.5,209.0 125.0,212.5 121.5,216.0 118.0,212.5"/><polygon fill="#ffa500" points="129.5,214.0 133.0,217.5 129.5,221.0 126.0,217.5"/><polygon fill="#ffa500" points="116.5,226.0 120.0,229.5 116.5,233.0 113.0,229.5"/><polygon fill="#ffa500" points="126.5,235.0 130.0,238.5 126.5,242.0 123.0,238.5"/><polygon fill="#ffa500" points="131.5,239.0 135.0,242.5 131.5,246.0 128.0,242.5"/><polygon fill="#ffa500" points="134.5,229.0 138.0,232.5 134.5,236.0 131.0,232.5"/><polygon fill="#ffa500" points="142.5,230.0 146.0,233.5 142.5,237.0 139.0,233.5"/><polygon fill="#ffa500" points="145.5,219.0 149.0,222.5 145.5,226.0 142.0,222.5"/><polygon fill="#ffa500" points="147.5,249.0 151.0,252.5 147.5,256.0 144.0,252.5"/><polygon fill="#ffa500" points="150.5,233.0 154.0,236.5 150.5,240.0 147.0,236.5"/><polygon fill="#ffa500" points="155.5,235.0 159.0,238.5 155.5,242.0 152.0,238.5"/><polygon fill="#ffa500" points="158.5,224.0 162.0,227.5 158.5,231.0 155.0,227.5"/><polygon fill="#ffa500" points="161.5,225.0 165.0,228.5 161.5,232.0 158.0,228.5"/><polygon fill="#ffa500" points="163.5,231.0 167.0,234.5 163.5,238.0 160.0,234.5"/><polygon fill="#ffa500" points="169.5,219.0 173.0,222.5 169.5,226.0 166.0,222.5"/><polygon fill="#ffa500" points="176.5,225.0 180.0,228.5 176.5,232.0 173.0,228.5"/><polygon fill="#ffa500" points="184.5,220.0 188.0,223.5 184.5,227.0 181.0,223.5"/><polygon fill="#ffa500" points="192.5,217.0 196.0,220.5 192.5,224.0 189.0,220.5"/><polygon fill="#ffa500" points="194.5,214.0 198.0,217.5 194.5,221.0 191.0,217.5"/><polygon fill="#ffa500" points="195.5,213.0 199.0,216.5 195.5,220.0 192.0,216.5"/><polygon fill="#ffa500" points="199.5,221.0 203.0,224.5 199.5,228.0 196.0,224.5"/><polygon fill="#ffa500" points="203.5,218.0 207.0,221.5 203.5,225.0 200.0,221.5"/><polygon fill="#ffa500" points="211.5,220.0 215.0,223.5 211.5,227.0 208.0,223.5"/><polygon fill="#ffa500" points="216.5,216.0 220.0,219.5 216.5,223.0 213.0,219.5"/><polygon fill="#ffa500" points="219.5,211.0 223.0,214.5 219.5,218.0 216.0,214.5"/><polygon fill="#ffa500" points="224.5,218.0 228.0,221.5 224.5,225.0 221.0,221.5"/><polygon fill="#ffa500" points="227.5,214.0 231.0,217.5 227.5,221.0 224.0,217.5"/><polygon fill="#ffa500" points="232.5,210.0 236.0,213.5 232.5,217.0 229.0,213.5"/><polygon fill="#ffa500" points="229.5,225.0 233.0,228.5 229.5,232.0 226.0,228.5"/><polygon fill="#ffa500" points="221.5,235.0 225.0,238.5 221.5,242.0 218.0,238.5"/><polygon fill="#ffa500" points="240.5,228.0 244.0,231.5 240.5,235.0 237.0,231.5"/><polygon fill="#ffa500" points="245.5,230.0 249.0,233.5 245.5,237.0 242.0,233.5"/><polygon fill="#ffa500" points="248.5,216.0 252.0,219.5 248.5,223.0 245.0,219.5"/><polygon fill="#ffa500" points="242.5,240.0 246.0,243.5 242.5,247.0 239.0,243.5"/><polygon fill="#ffa500" points="250.5,237.0 254.0,240.5 250.5,244.0 247.0,240.5"/><polygon fill="#ffa500" points="253.5,223.0 257.0,226.5 253.5,230.0 250.0,226.5"/><polygon fill="#ffa500" points="257.5,227.0 261.0,230.5 257.5,234.0 254.0,230.5"/><polygon fill="#ffa500" points="261.5,226.0 265.0,229.5 261.5,233.0 258.0,229.5"/><polygon fill="#ffa500" points="266.5,231.0 270.0,234.5 266.5,238.0 263.0,234.5"/><polygon fill="#ffa500" points="264.5,234.0 268.0,237.5 264.5,241.0 261.0,237.5"/><polygon fill="#ffa500" points="269.5,214.0 273.0,217.5 269.5,221.0 266.0,217.5"/><polygon fill="#ffa500" points="274.5,238.0 278.0,241.5 274.5,245.0 271.0,241.5"/><polygon fill="#ffa500" points="279.5,236.0 283.0,239.5 279.5,243.0 276.0,239.5"/><polygon fill="#ffa500" points="282.5,244.0 286.0,247.5 282.5,251.0 279.0,247.5"/><polygon fill="#ffa500" points="296.5,218.0 300.0,221.5 296.5,225.0 293.0,221.5"/><polygon fill="#ffa500" points="303.5,226.0 307.0,229.5 303.5,233.0 300.0,229.5"/><polygon fill="#ffa500" points="304.5,239.0 308.0,242.5 304.5,246.0 301.0,242.5"/><polygon fill="#ffa500" points="309.5,218.0 313.0,221.5 309.5,225.0 306.0,221.5"/><polygon fill="#ffa500" points="305.5,226.0 309.0,229.5 305.5,233.0 302.0,229.5"/><polygon fill="#ffa500" points="306.5,239.0 310.0,242.5 306.5,246.0 303.0,242.5"/><polygon fill="#ffa500" points="314.5,235.0 318.0,238.5 314.5,242.0 311.0,238.5"/><polygon fill="#ffa500" points="322.5,220.0 326.0,223.5 322.5,227.0 319.0,223.5"/><polygon fill="#ffa500" points="327.5,216.0 331.0,219.5 327.5,223.0 324.0,219.5"/><polygon fill="#ffa500" points="325.5,238.0 329.0,241.5 325.5,245.0 322.0,241.5"/><polygon fill="#ffa500" points="330.5,239.0 334.0,242.5 330.5,246.0 327.0,242.5"/><polygon fill="#ffa500" points="341.5,219.0 345.0,222.5 341.5,226.0 338.0,222.5"/><polygon fill="#ffa500" points="343.5,223.0 347.0,226.5 343.5,230.0 340.0,226.5"/><polygon fill="#ffa500" points="346.5,217.0 350.0,220.5 346.5,224.0 343.0,220.5"/><polygon fill="#ffa500" points="351.5,214.0 355.0,217.5 351.5,221.0 348.0,217.5"/><polygon fill="#ffa500" points="348.5,227.0 352.0,230.5 348.5,234.0 345.0,230.5"/><polygon fill="#ffa500" points="354.5,225.0 358.0,228.5 354.5,232.0 351.0,228.5"/><polygon fill="#ffa500" points="362.5,215.0 366.0,218.5 362.5,222.0 359.0,218.5"/><polygon fill="#ffa500" points="367.5,216.0 371.0,219.5 367.5,223.0 364.0,219.5"/><polygon fill="#ffa500" points="372.5,218.0 376.0,221.5 372.5,225.0 369.0,221.5"/><polygon fill="#ffa500" points="364.5,231.0 368.0,234.5 364.5,238.0 361.0,234.5"/><polygon fill="#ffa500" points="369.5,245.0 373.0,248.5 369.5,252.0 366.0,248.5"/><polygon fill="#ffa500" points="377.5,231.0 381.0,234.5 377.5,238.0 374.0,234.5"/><polygon fill="#ffa500" points="375.5,235.0 379.0,238.5 375.5,242.0 372.0,238.5"/><polygon fill="#ffa500" points="380.5,216.0 384.0,219.5 380.5,223.0 377.0,219.5"/><polygon fill="#ffa500" points="388.5,213.0 392.0,216.5 388.5,220.0 385.0,216.5"/><polygon fill="#ffa500" points="391.5,212.0 395.0,215.5 391.5,219.0 388.0,215.5"/><polygon fill="#ffa500" points="407.5,210.0 411.0,213.5 407.5,217.0 404.0,213.5"/><polygon fill="#ffa500" points="404.5,221.0 408.0,224.5 404.5,228.0 401.0,224.5"/><polygon fill="#ffa500" points="412.5,223.0 416.0,226.5 412.5,230.0 409.0,226.5"/><polygon fill="#ffa500" points="416.5,223.0 420.0,226.5 416.5,230.0 413.0,226.5"/><polygon fill="#ffa500" points="421.5,219.0 425.0,222.5 421.5,226.0 418.0,222.5"/><polygon fill="#ffa500" points="428.5,222.0 432.0,225.5 428.5,229.0 425.0,225.5"/><polygon fill="#ffa500" points="438.5,213.0 442.0,216.5 438.5,220.0 435.0,216.5"/><polygon fill="#ffa500" points="444.5,227.0 448.0,230.5 444.5,234.0 441.0,230.5"/><polygon fill="#ffa500" points="441.5,233.0 445.0,236.5 441.5,240.0 438.0,236.5"/><polygon fill="#ffa500" points="436.5,239.0 440.0,242.5 436.5,246.0 433.0,242.5"/><polygon fill="#ffa500" points="454.5,218.0 458.0,221.5 454.5,225.0 451.0,221.5"/><polygon fill="#ffa500" points="457.5,218.0 461.0,221.5 457.5,225.0 454.0,221.5"/><polygon fill="#ffa500" points="459.5,235.0 463.0,238.5 459.5,242.0 456.0,238.5"/><polygon fill="#ffa500" points="467.5,220.0 471.0,223.5 467.5,227.0 464.0,223.5"/><polygon fill="#ffa500" points="473.5,222.0 477.0,225.5 473.5,229.0 470.0,225.5"/><polygon fill="#ffa500" points="475.5,219.0 479.0,222.5 475.5,226.0 472.0,222.5"/><polygon fill="#ffa500" points="481.5,217.0 485.0,220.5 481.5,224.0 478.0,220.5"/><polygon fill="#ffa500" points="486.5,215.0 490.0,218.5 486.5,222.0 483.0,218.5"/><polygon fill="#ffa500" points="483.5,226.0 487.0,229.5 483.5,233.0 480.0,229.5"/><polygon fill="#ffa500" points="478.5,237.0 482.0,240.5 478.5,244.0 475.0,240.5"/><polygon fill="#ffa500" points="496.5,221.0 500.0,224.5 496.5,228.0 493.0,224.5"/><polygon fill="#ffa500" points="512.5,218.0 516.0,221.5 512.5,225.0 509.0,221.5"/><polygon fill="#ffa500" points="515.5,225.0 519.0,228.5 515.5,232.0 512.0,228.5"/><polygon fill="#ffa500" points="520.5,241.0 524.0,244.5 520.5,248.0 517.0,244.5"/></g>
<g><polygon fill="#6a5acd" points="100.5,185.0 103.0,187.5 100.5,190.0 98.0,187.5"/><polygon fill="#6a5acd" points="217.5,161.0 220.0,163.5 217.5,166.0 215.0,163.5"/><polygon fill="#6a5acd" points="248.5,158.0 251.0,160.5 248.5,163.0 246.0,160.5"/><polygon fill="#6a5acd" points="267.5,159.0 270.0,161.5 267.5,164.0 265.0,161.5"/><polygon fill="#6a5acd" points="209.5,188.0 212.0,190.5 209.5,193.0 207.0,190.5"/><polygon fill="#6a5acd" points="243.5,187.0 246.0,189.5 243.5,192.0 241.0,189.5"/><polygon fill="#6a5acd" points="251.5,190.0 254.0,192.5 251.5,195.0 249.0,192.5"/><polygon fill="#6a5acd" points="283.5,191.0 286.0,193.5 283.5,196.0 281.0,193.5"/><polygon fill="#6a5acd" points="291.5,180.0 294.0,182.5 291.5,185.0 289.0,182.5"/><polygon fill="#6a5acd" points="346.5,159.0 349.0,161.5 346.5,164.0 344.0,161.5"/><polygon fill="#6a5acd" points="365.5,171.0 368.0,173.5 365.5,176.0 363.0,173.5"/><polygon fill="#6a5acd" points="354.5,175.0 357.0,177.5 354.5,180.0 352.0,177.5"/><polygon fill="#6a5acd" points="357.5,188.0 360.0,190.5 357.5,193.0 355.0,190.5"/><polygon fill="#6a5acd" points="394.5,188.0 397.0,190.5 394.5,193.0 392.0,190.5"/><polygon fill="#6a5acd" points="404.5,191.0 407.0,193.5 404.5,196.0 402.0,193.5"/><polygon fill="#6a5acd" points="414.5,189.0 417.0,191.5 414.5,194.0 412.0,191.5"/><polygon fill="#6a5acd" points="476.5,158.0 479.0,160.5 476.5,163.0 474.0,160.5"/><polygon fill="#6a5acd" points="457.5,181.0 460.0,183.5 457.5,186.0 455.0,183.5"/><polygon fill="#6a5acd" points="518.5,178.0 521.0,180.5 518.5,183.0 516.0,180.5"/><polygon fill="#6a5acd" points="436.5,190.0 439.0,192.5 436.5,195.0 434.0,192.5"/><polygon fill="#6a5acd" points="439.5,189.0 442.0,191.5 439.5,194.0 437.0,191.5"/><polygon fill="#6a5acd" points="497.5,195.0 500.0,197.5 497.5,200.0 495.0,197.5"/><polygon fill="#6a5acd" points="142.5,218.0 145.0,220.5 142.5,223.0 140.0,220.5"/></g>
<g><rect x="245.5" y="253.5" width="4" height="4" fill="none" stroke="#ffffff" stroke-width="1"/><rect x="258.5" y="290.5" width="4" height="4" fill="none" stroke="#ffffff" stroke-width="1"/><rect x="260.5" y="292.5" width="4" height="4" fill="none" stroke="#ffffff" stroke-width="1"/><rect x="521.5" y="291.5" width="4" height="4" fill="none" stroke="#ffffff" stroke-width="1"/><path fill="#228b22" d="M135,125h1v2h2v1h-2v2h-1v-2h-2v-1h2z"/><path fill="#228b22" d="M135,127h1v2h2v1h-2v2h-1v-2h-2v-1h2z"/><path fill="#228b22" d="M101,150h1v2h2v1h-2v2h-1v-2h-2v-1h2z"/><path fill="#228b22" d="M138,156h1v2h2v1h-2v2h-1v-2h-2v-1h2z"/><path fill="#228b22" d="M140,157h1v2h2v1h-2v2h-1v-2h-2v-1h2z"/><path fill="#228b22" d="M156,161h1v2h2v1h-2v2h-1v-2h-2v-1h2z"/><path fill="#228b22" d="M95,184h1v2h2v1h-2v2h-1v-2h-2v-1h2z"/><path fill="#228b22" d="M140,188h1v2h2v1h-2v2h-1v-2h-2v-1h2z"/><path fill="#228b22" d="M151,188h1v2h2v1h-2v2h-1v-2h-2v-1h2z"/><path fill="#228b22" d="M164,182h1v2h2v1h-2v2h-1v-2h-2v-1h2z"/><path fill="#228b22" d="M169,186h1v2h2v1h-2v2h-1v-2h-2v-1h2z"/><path fill="#228b22" d="M185,189h1v2h2v1h-2v2h-1v-2h-2v-1h2z"/><path fill="#228b22" d="M193,187h1v2h2v1h-2v2h-1v-2h-2v-1h2z"/><path fill="#228b22" d="M286,146h1v2h2v1h-2v2h-1v-2h-2v-1h2z"/><path fill="#228b22" d="M297,153h1v2h2v1h-2v2h-1v-2h-2v-1h2z"/><path fill="#228b22" d="M230,156h1v2h2v1h-2v2h-1v-2h-2v-1h2z"/><path fill="#228b22" d="M254,158h1v2h2v1h-2v2h-1v-2h-2v-1h2z"/><path fill="#228b22" d="M211,188h1v2h2v1h-2v2h-1v-2h-2v-1h2z"/><path fill="#228b22" d="M272,184h1v2h2v1h-2v2h-1v-2h-2v-1h2z"/><path fill="#228b22" d="M288,187h1v2h2v1h-2v2h-1v-2h-2v-1h2z"/><path fill="#228b22" d="M296,191h1v2h2v1h-2v2h-1v-2h-2v-1h2z"/><path fill="#228b22" d="M355,145h1v2h2v1h-2v2h-1v-2h-2v-1h2z"/><path fill="#228b22" d="M379,144h1v2h2v1h-2v2h-1v-2h-2v-1h2z"/><path fill="#228b22" d="M328,152h1v2h2v1h-2v2h-1v-2h-2v-1h2z"/><path fill="#228b22" d="M352,154h1v2h2v1h-2v2h-1v-2h-2v-1h2z"/><path fill="#228b22" d="M381,153h1v2h2v1h-2v2h-1v-2h-2v-1h2z"/><path fill="#228b22" d="M318,160h1v2h2v1h-2v2h-1v-2h-2v-1h2z"/><path fill="#228b22" d="M349,158h1v2h2v1h-2v2h-1v-2h-2v-1h2z"/><path fill="#228b22" d="M352,160h1v2h2v1h-2v2h-1v-2h-2v-1h2z"/><path fill="#228b22" d="M392,161h1v2h2v1h-2v2h-1v-2h-2v-1h2z"/><path fill="#228b22" d="M326,186h1v2h2v1h-2v2h-1v-2h-2v-1h2z"/><path fill="#228b22" d="M331,188h1v2h2v1h-2v2h-1v-2h-2v-1h2z"/><path fill="#228b22" d="M341,186h1v2h2v1h-2v2h-1v-2h-2v-1h2z"/><path fill="#228b22" d="M341,187h1v2h2v1h-2v2h-1v-2h-2v-1h2z"/><path fill="#228b22" d="M357,184h1v2h2v1h-2v2h-1v-2h-2v-1h2z"/><path fill="#228b22" d="M365,189h1v2h2v1h-2v2h-1v-2h-2v-1h2z"/><path fill="#228b22" d="M386,190h1v2h2v1h-2v2h-1v-2h-2v-1h2z"/><path fill="#228b22" d="M394,185h1v2h2v1h-2v2h-1v-2h-2v-1h2z"/><path fill="#228b22" d="M400,187h1v2h2v1h-2v2h-1v-2h-2v-1h2z"/><path fill="#228b22" d="M402,186h1v2h2v1h-2v2h-1v-2h-2v-1h2z"/><path fill="#228b22" d="M434,152h1v2h2v1h-2v2h-1v-2h-2v-1h2z"/><path fill="#228b22" d="M508,152h1v2h2v1h-2v2h-1v-2h-2v-1h2z"/><path fill="#228b22" d="M508,156h1v2h2v1h-2v2h-1v-2h-2v-1h2z"/><path fill="#228b22" d="M490,161h1v2h2v1h-2v2h-1v-2h-2v-1h2z"/><path fill="#228b22" d="M431,189h1v2h2v1h-2v2h-1v-2h-2v-1h2z"/><path fill="#228b22" d="M450,189h1v2h2v1h-2v2h-1v-2h-2v-1h2z"/><path fill="#228b22" d="M452,189h1v2h2v1h-2v2h-1v-2h-2v-1h2z"/><path fill="#228b22" d="M492,190h1v2h2v1h-2v2h-1v-2h-2v-1h2z"/><path fill="#228b22" d="M524,189h1v2h2v1h-2v2h-1v-2h-2v-1h2z"/><path fill="#228b22" d="M436,201h1v2h2v1h-2v2h-1v-2h-2v-1h2z"/><path fill="#228b22" d="M174,213h1v2h2v1h-2v2h-1v-2h-2v-1h2z"/><path fill="#228b22" d="M148,246h1v2h2v1h-2v2h-1v-2h-2v-1h2z"/><path fill="#228b22" d="M240,215h1v2h2v1h-2v2h-1v-2h-2v-1h2z"/><path fill="#228b22" d="M301,214h1v2h2v1h-2v2h-1v-2h-2v-1h2z"/></g>
<rect x="575" y="100" width="5" height="5" fill="#00ffff"/>
<path fill="#ff00ff" d="M577,113h1v2h1v2h1v1h-5v-2h1v-2h1z"/>
<polygon fill="#ffff00" points="577.5,125.0 581.0,128.5 577.5,132.0 574.0,128.5"/>
<polygon fill="#f01838" points="577.5,139.0 580.0,141.5 577.5,144.0 575.0,141.5"/>
<path fill="#5050f0" d="M577,152h1v2h2v1h-2v2h-1v-2h-2v-1h2z"/>
<path fill="#30e830" d="M576,165h3v1h1v3h-1v1h-3v-1h-1v-3h1z M576,166v3h3v-3z" fill-rule="evenodd"/>
<rect x="575.5" y="178.5" width="4" height="4" fill="none" stroke="#ffffff" stroke-width="1"/>
<path fill="#8b4726" d="M575,191h2v-1h1v1h2v5h-5v-2h-1v-1h1z"/>
<rect x="575" y="204" width="5" height="5" fill="#b4b4b4"/>
<path fill="#a020f0" d="M577,217h1v2h1v2h1v1h-5v-2h1v-2h1z"/>
<polygon fill="#ffa500" points="577.5,229.0 581.0,232.5 577.5,236.0 574.0,232.5"/>
<polygon fill="#6a5acd" points="577.5,243.0 580.0,245.5 577.5,248.0 575.0,245.5"/>
<path fill="#228b22" d="M577,256h1v2h2v1h-2v2h-1v-2h-2v-1h2z"/>
</svg>
<div class="a tl dg6" style="left:78px;top:304px;color:#00ec00;" id="y0"><i>0</i></div>
<div class="a tl dg6" style="left:66px;top:255px;color:#00ec00;" id="y100"><i>1</i><i>0</i><i>0</i></div>
<div class="a tl dg6" style="left:66px;top:206px;color:#00ec00;" id="y200"><i>2</i><i>0</i><i>0</i></div>
<div class="a tl dg6" style="left:66px;top:156px;color:#00ec00;" id="y300"><i>3</i><i>0</i><i>0</i></div>
<div class="a tl dg6" style="left:66px;top:107px;color:#00ec00;" id="y400"><i>4</i><i>0</i><i>0</i></div>
<div class="a tl dg6" style="left:79px;top:318px;color:#00ec00;" id="x0"><i>0</i><i>1</i><i>:</i><i>4</i><i>3</i><i>:</i><i>0</i><i>0</i></div>
<div class="a tl dg6" style="left:146px;top:318px;color:#00ec00;" id="x1"><i>0</i><i>1</i><i>:</i><i>4</i><i>3</i><i>:</i><i>2</i><i>0</i></div>
<div class="a tl dg6" style="left:213px;top:318px;color:#00ec00;" id="x2"><i>0</i><i>1</i><i>:</i><i>4</i><i>3</i><i>:</i><i>4</i><i>0</i></div>
<div class="a tl dg6" style="left:280px;top:318px;color:#00ec00;" id="x3"><i>0</i><i>1</i><i>:</i><i>4</i><i>4</i><i>:</i><i>0</i><i>0</i></div>
<div class="a tl dg6" style="left:348px;top:318px;color:#00ec00;" id="x4"><i>0</i><i>1</i><i>:</i><i>4</i><i>4</i><i>:</i><i>2</i><i>0</i></div>
<div class="a tl dg6" style="left:415px;top:318px;color:#00ec00;" id="x5"><i>0</i><i>1</i><i>:</i><i>4</i><i>4</i><i>:</i><i>4</i><i>0</i></div>
<div class="a mono tl" style="left:294px;top:338px;color:#00ec00;transform:scale(1,1.25);" id="time">Time</div>
<div class="a mono tl" style="left:24.5px;top:206px;width:60px;text-align:center;color:#00ec00;transform:rotate(-90deg) scale(1,1.12);transform-origin:50% 50%" id="rtt">rtt (msec)</div>
<div class="a tl dg6" style="left:616px;top:95px;color:#fff;-webkit-text-stroke:0.15px;" id="l1"><i>1</i></div>
<div class="a tl dg6" style="left:616px;top:108px;color:#fff;-webkit-text-stroke:0.15px;" id="l2"><i>2</i></div>
<div class="a tl dg6" style="left:616px;top:121px;color:#fff;-webkit-text-stroke:0.15px;" id="l3"><i>3</i></div>
<div class="a tl dg6" style="left:616px;top:134px;color:#fff;-webkit-text-stroke:0.15px;" id="l4"><i>4</i></div>
<div class="a tl dg6" style="left:616px;top:147px;color:#fff;-webkit-text-stroke:0.15px;" id="l5"><i>5</i></div>
<div class="a tl dg6" style="left:616px;top:160px;color:#fff;-webkit-text-stroke:0.15px;" id="l6"><i>6</i></div>
<div class="a tl dg6" style="left:616px;top:173px;color:#fff;-webkit-text-stroke:0.15px;" id="l7"><i>7</i></div>
<div class="a tl dg6" style="left:616px;top:186px;color:#fff;-webkit-text-stroke:0.15px;" id="l8"><i>8</i></div>
<div class="a tl dg6" style="left:616px;top:199px;color:#fff;-webkit-text-stroke:0.15px;" id="l9"><i>9</i></div>
<div class="a tl dg6" style="left:610px;top:212px;color:#fff;-webkit-text-stroke:0.15px;" id="l10"><i>1</i><i>0</i></div>
<div class="a tl dg6" style="left:610px;top:225px;color:#fff;-webkit-text-stroke:0.15px;" id="l11"><i>1</i><i>1</i></div>
<div class="a tl dg6" style="left:610px;top:238px;color:#fff;-webkit-text-stroke:0.15px;" id="l12"><i>1</i><i>2</i></div>
<div class="a tl dg6" style="left:610px;top:251px;color:#fff;-webkit-text-stroke:0.15px;" id="l13"><i>1</i><i>3</i></div>
<div class="a" style="left:62px;top:389px;width:111px;height:27px;background:#5252e6;box-sizing:border-box;border-style:solid;border-width:1px 2px 2px 1px;border-color:#8484f2 #3c3cb4 #3c3cb4 #8484f2"></div>
<div class="a" style="left:69px;top:396px;line-height:14px;font-size:12px;font-weight:bold;font-style:italic;color:#fff;white-space:nowrap;letter-spacing:0.23px;will-change:transform" id="pi">Path Information</div>
<div class="a hop" style="top:424px;background:#00ffff;color:#000"><div class="cb" style="border-color:#007f7f #99ffff #99ffff #007f7f"></div><svg style="position:absolute;left:3px;top:2px" width="13" height="13" viewBox="0 0 13 13"><path d="M0.8,9.4 L3.4,6.1 L5.6,7.8 L10.4,1.6 L11.4,2.4 L6.4,11.8 L4,11.8 Z" fill="#000"/></svg><span style="left:25.5px">hop 1</span></div>
<div class="a ent" style="top:421px">aagw-e0.caida.org</div>
<div class="a hop" style="top:445px;background:#ff00ff;color:#fff"><div class="cb" style="border-color:#7f007f #ff99ff #ff99ff #7f007f"></div><svg style="position:absolute;left:3px;top:2px" width="13" height="13" viewBox="0 0 13 13"><path d="M0.8,9.4 L3.4,6.1 L5.6,7.8 L10.4,1.6 L11.4,2.4 L6.4,11.8 L4,11.8 Z" fill="#fff"/></svg><span style="left:25.5px">hop 2</span></div>
<div class="a ent" style="top:442px">rtr2-ser2-0.blackrose.org</div>
<div class="a hop" style="top:466px;background:#ffff00;color:#000"><div class="cb" style="border-color:#7f7f00 #ffff99 #ffff99 #7f7f00"></div><svg style="position:absolute;left:3px;top:2px" width="13" height="13" viewBox="0 0 13 13"><path d="M0.8,9.4 L3.4,6.1 L5.6,7.8 L10.4,1.6 L11.4,2.4 L6.4,11.8 L4,11.8 Z" fill="#000"/></svg><span style="left:25.5px">hop 3</span></div>
<div class="a ent" style="top:463px">rtr1-ether1-1.blackrose.org</div>
<div class="a hop" style="top:487px;background:#f01838;color:#fff"><div class="cb" style="border-color:#780c1c #f9a2af #f9a2af #780c1c"></div><svg style="position:absolute;left:3px;top:2px" width="13" height="13" viewBox="0 0 13 13"><path d="M0.8,9.4 L3.4,6.1 L5.6,7.8 L10.4,1.6 L11.4,2.4 L6.4,11.8 L4,11.8 Z" fill="#fff"/></svg><span style="left:25.5px">hop 4</span></div>
<div class="a ent" style="top:484px">blackrose.arb1.verio.net</div>
<div class="a hop" style="top:508px;background:#5454f0;color:#fff"><div class="cb" style="border-color:#2a2a78 #babaf9 #babaf9 #2a2a78"></div><svg style="position:absolute;left:3px;top:2px" width="13" height="13" viewBox="0 0 13 13"><path d="M0.8,9.4 L3.4,6.1 L5.6,7.8 L10.4,1.6 L11.4,2.4 L6.4,11.8 L4,11.8 Z" fill="#fff"/></svg><span style="left:25.5px">hop 5</span></div>
<div class="a ent" style="top:505px">fe1-0-0.arb0.verio.net</div>
<div class="a hop" style="top:529px;background:#32f032;color:#000"><div class="cb" style="border-color:#197819 #adf9ad #adf9ad #197819"></div><svg style="position:absolute;left:3px;top:2px" width="13" height="13" viewBox="0 0 13 13"><path d="M0.8,9.4 L3.4,6.1 L5.6,7.8 L10.4,1.6 L11.4,2.4 L6.4,11.8 L4,11.8 Z" fill="#000"/></svg><span style="left:25.5px">hop 6</span></div>
<div class="a ent" style="top:526px">arb0.iad0.verio.net</div>
<div class="a hop" style="top:550px;background:#ffffff;color:#000"><div class="cb" style="border-color:#8c8c8c #c4c4c4 #c4c4c4 #8c8c8c"></div><svg style="position:absolute;left:3px;top:2px" width="13" height="13" viewBox="0 0 13 13"><path d="M0.8,9.4 L3.4,6.1 L5.6,7.8 L10.4,1.6 L11.4,2.4 L6.4,11.8 L4,11.8 Z" fill="#000"/></svg><span style="left:25.5px">hop 7</span></div>
<div class="a ent" style="top:547px">iad3.iad1.verio.net</div>
<div class="a hop" style="top:571px;background:#8c4424;color:#fff"><div class="cb" style="border-color:#462212 #d1b4a7 #d1b4a7 #462212"></div><svg style="position:absolute;left:3px;top:2px" width="13" height="13" viewBox="0 0 13 13"><path d="M0.8,9.4 L3.4,6.1 L5.6,7.8 L10.4,1.6 L11.4,2.4 L6.4,11.8 L4,11.8 Z" fill="#fff"/></svg><span style="left:25.5px">hop 8</span></div>
<div class="a ent" style="top:568px">mae-e-1.e0.crl.com</div>
<div class="a hop" style="top:592px;background:#a8a8a8;color:#000"><div class="cb" style="border-color:#545454 #dcdcdc #dcdcdc #545454"></div><svg style="position:absolute;left:3px;top:2px" width="13" height="13" viewBox="0 0 13 13"><path d="M0.8,9.4 L3.4,6.1 L5.6,7.8 L10.4,1.6 L11.4,2.4 L6.4,11.8 L4,11.8 Z" fill="#000"/></svg><span style="left:25.5px">hop 9</span></div>
<div class="a ent" style="top:589px">dfw-vva.x.atm.us.crl.net</div>
<div class="a hop" style="top:613px;background:#a020f0;color:#fff"><div class="cb" style="border-color:#501078 #d9a5f9 #d9a5f9 #501078"></div><svg style="position:absolute;left:3px;top:2px" width="13" height="13" viewBox="0 0 13 13"><path d="M0.8,9.4 L3.4,6.1 L5.6,7.8 L10.4,1.6 L11.4,2.4 L6.4,11.8 L4,11.8 Z" fill="#fff"/></svg><span style="left:21.5px">hop 10</span></div>
<div class="a ent" style="top:610px">165.113.0.245</div>
<div class="a hop" style="top:634px;background:#ffa500;color:#000"><div class="cb" style="border-color:#7f5200 #ffdb99 #ffdb99 #7f5200"></div><svg style="position:absolute;left:3px;top:2px" width="13" height="13" viewBox="0 0 13 13"><path d="M0.8,9.4 L3.4,6.1 L5.6,7.8 L10.4,1.6 L11.4,2.4 L6.4,11.8 L4,11.8 Z" fill="#000"/></svg><span style="left:21.5px">hop 11</span></div>
<div class="a ent" style="top:631px">165.113.61.254</div>
<div class="a hop" style="top:655px;background:#6858d0;color:#fff"><div class="cb" style="border-color:#342c68 #c2bcec #c2bcec #342c68"></div><svg style="position:absolute;left:3px;top:2px" width="13" height="13" viewBox="0 0 13 13"><path d="M0.8,9.4 L3.4,6.1 L5.6,7.8 L10.4,1.6 L11.4,2.4 L6.4,11.8 L4,11.8 Z" fill="#fff"/></svg><span style="left:21.5px">hop 12</span></div>
<div class="a ent" style="top:652px">T1-CDROM-00-EX.US.CRL.NET</div>
<div class="a hop" style="top:676px;background:#208820;color:#fff"><div class="cb" style="border-color:#104410 #a5cfa5 #a5cfa5 #104410"></div><svg style="position:absolute;left:3px;top:2px" width="13" height="13" viewBox="0 0 13 13"><path d="M0.8,9.4 L3.4,6.1 L5.6,7.8 L10.4,1.6 L11.4,2.4 L6.4,11.8 L4,11.8 Z" fill="#fff"/></svg><span style="left:21.5px">hop 13</span></div>
<div class="a ent" style="top:673px">freefall.FreeBSD.ORG</div>
<div class="a" style="left:0;top:751px;width:640px;height:1px;background:#454945"></div>
<div class="a" style="left:0;top:753px;width:640px;height:6px;background:linear-gradient(#ac6233,#b96c3b)"></div>
<div class="a hi" style="left:0;top:753px;width:640px;height:1px"></div>
<div class="a dg" style="left:0;top:758px;width:640px;height:1px"></div>
<div class="a hi" style="left:0;top:753px;width:1px;height:6px"></div>
<div class="a dg" style="left:27px;top:753px;width:1px;height:6px"></div>
<div class="a hi" style="left:28px;top:753px;width:1px;height:6px"></div>
<div class="a dg" style="left:612px;top:753px;width:1px;height:6px"></div>
<div class="a hi" style="left:613px;top:753px;width:1px;height:6px"></div>
<div class="a dg" style="left:639px;top:753px;width:1px;height:6px"></div>
</body></html>
